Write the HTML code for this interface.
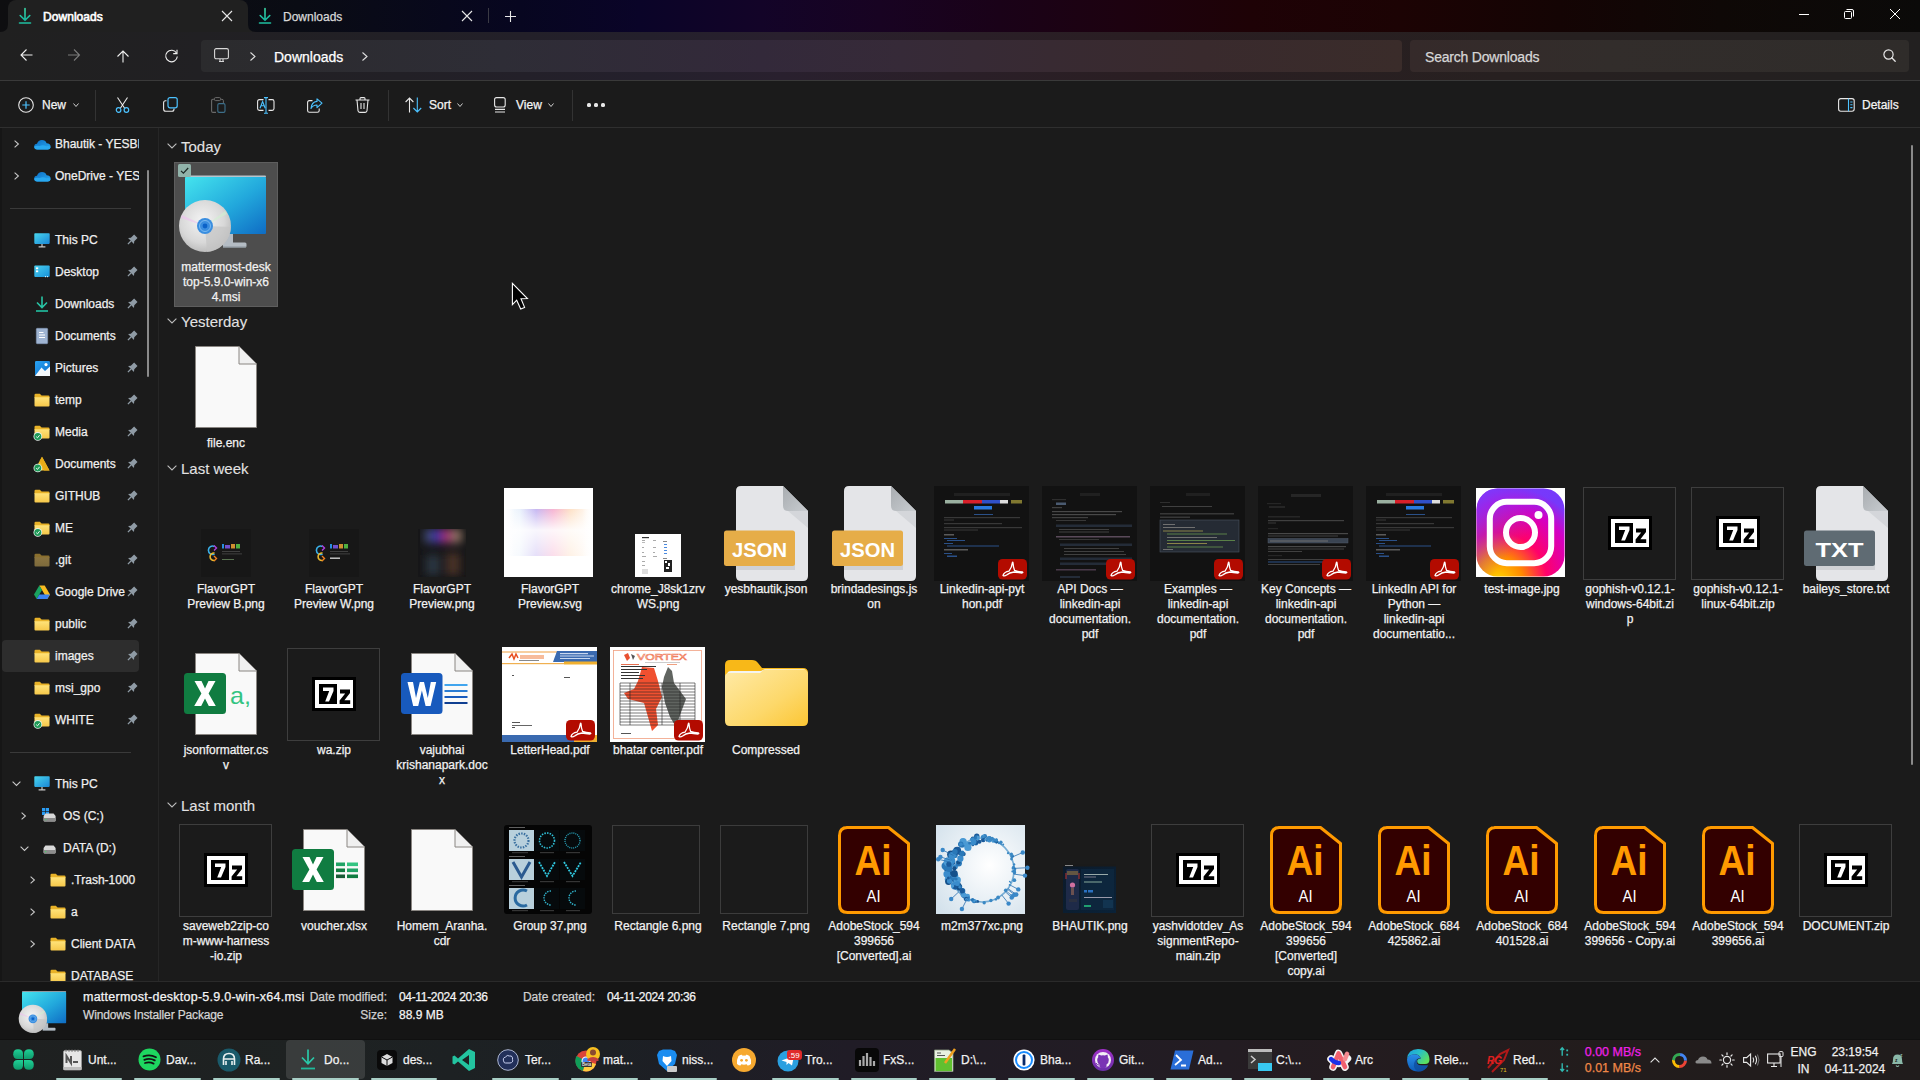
<!DOCTYPE html>
<html><head><meta charset="utf-8"><title>Downloads</title>
<style>
*{margin:0;padding:0;box-sizing:border-box}
html,body{width:1920px;height:1080px;overflow:hidden;background:#1b1b1b;font-family:"Liberation Sans",sans-serif;color:#fff}
.abs{position:absolute}
.t{position:absolute;white-space:nowrap;-webkit-text-stroke:0.25px currentColor}
svg{position:absolute;overflow:visible}
</style></head><body>
<div class="abs" style="left:0px;top:0px;width:1920px;height:32px;background:linear-gradient(90deg,#0e0e10 0px,#0a0c14 300px,#070620 520px,#0a0428 640px,#130428 760px,#180322 880px,#1a0218 1000px,#1d0210 1120px,#1e0206 1250px,#1c0304 1400px,#140404 1560px,#0e0806 1720px,#0b0a09 1920px)"></div><div class="abs" style="left:8px;top:0px;width:240px;height:32px;background:#202020;border-radius:8px 8px 0 0"></div><svg style="left:0px;top:24px;" width="8" height="8" viewBox="0 0 8 8"><path d="M0 8 Q8 8 8 0 L8 8 Z" fill="#202020"/></svg><svg style="left:248px;top:24px;" width="8" height="8" viewBox="0 0 8 8"><path d="M8 8 Q0 8 0 0 L0 8 Z" fill="#202020"/></svg><svg style="left:19px;top:8px;transform:scale(1.0);transform-origin:0 0" width="12" height="16" viewBox="0 0 12 16"><defs><linearGradient id="dg" x1="0" y1="0" x2="0" y2="1"><stop offset="0" stop-color="#3ad6a6"/><stop offset="1" stop-color="#16b8a0"/></linearGradient></defs><path d="M6 0.5 V12 M1.2 7.5 L6 12.3 L10.8 7.5" stroke="url(#dg)" stroke-width="1.6" fill="none" stroke-linecap="round" stroke-linejoin="round"/><path d="M0.5 15 H11.5" stroke="#1fbfa0" stroke-width="1.6" stroke-linecap="round"/></svg><div class="t" style="top:9.8px;font-size:12px;line-height:15px;color:#ffffff;left:43px;-webkit-text-stroke:0.6px #fff;letter-spacing:0.05px">Downloads</div><svg style="left:221.5px;top:11px;" width="10" height="10" viewBox="0 0 10 10"><path d="M0 0 L10 10 M10 0 L0 10" stroke="#e8e8e8" stroke-width="1.1"/></svg><svg style="left:259px;top:8px;transform:scale(1.0);transform-origin:0 0" width="12" height="16" viewBox="0 0 12 16"><defs><linearGradient id="dg" x1="0" y1="0" x2="0" y2="1"><stop offset="0" stop-color="#3ad6a6"/><stop offset="1" stop-color="#16b8a0"/></linearGradient></defs><path d="M6 0.5 V12 M1.2 7.5 L6 12.3 L10.8 7.5" stroke="url(#dg)" stroke-width="1.6" fill="none" stroke-linecap="round" stroke-linejoin="round"/><path d="M0.5 15 H11.5" stroke="#1fbfa0" stroke-width="1.6" stroke-linecap="round"/></svg><div class="t" style="top:9.8px;font-size:12px;line-height:15px;color:#d8d8d8;left:283px;">Downloads</div><svg style="left:462px;top:11px;" width="10" height="10" viewBox="0 0 10 10"><path d="M0 0 L10 10 M10 0 L0 10" stroke="#e8e8e8" stroke-width="1.1"/></svg><div class="abs" style="left:488px;top:8px;width:1px;height:15px;background:#3a3a44"></div><svg style="left:505px;top:11px;" width="11" height="11" viewBox="0 0 11 11"><path d="M5.5 0 V11 M0 5.5 H11" stroke="#e8e8e8" stroke-width="1.1"/></svg><div class="abs" style="left:1799px;top:14px;width:10px;height:1px;background:#fff"></div><svg style="left:1844px;top:9px;" width="10" height="10" viewBox="0 0 10 10"><rect x="0.5" y="2.5" width="7" height="7" rx="1" fill="none" stroke="#fff" stroke-width="1"/><path d="M2.5 0.5 H8 Q9.5 0.5 9.5 2 V7.5" fill="none" stroke="#fff" stroke-width="1"/></svg><svg style="left:1890px;top:9px;" width="10" height="10" viewBox="0 0 10 10"><path d="M0 0 L10 10 M10 0 L0 10" stroke="#fff" stroke-width="1"/></svg><div class="abs" style="left:0px;top:32px;width:1920px;height:48px;background:linear-gradient(90deg,#202020 0px,#222026 400px,#24202c 650px,#29202e 780px,#2a1f28 950px,#2a1e22 1150px,#272020 1500px,#222020 1920px)"></div><div class="abs" style="left:201px;top:40px;width:1201px;height:32px;background:linear-gradient(90deg,#2b2b2d 0px,#2e2d36 300px,#33293a 560px,#362a38 700px,#382a32 850px,#392a2d 1000px,#3a2c2a 1201px);border-radius:4px"></div><div class="abs" style="left:1410px;top:40px;width:499px;height:32px;background:linear-gradient(90deg,#352a2a 0px,#322d2b 200px,#2f2c2a 499px);border-radius:4px"></div><svg style="left:20px;top:49px;" width="13" height="12" viewBox="0 0 13 12"><path d="M12.5 6 H1 M6.5 0.5 L1 6 L6.5 11.5" stroke="#f0f0f0" stroke-width="1.1" fill="none"/></svg><svg style="left:68px;top:49px;" width="13" height="12" viewBox="0 0 13 12"><path d="M0 6 H11.5 M6 0.5 L11.5 6 L6 11.5" stroke="#7a7a7a" stroke-width="1.1" fill="none"/></svg><svg style="left:117px;top:49.5px;" width="12" height="13" viewBox="0 0 12 13"><path d="M6 12.5 V1 M0.5 6.5 L6 1 L11.5 6.5" stroke="#f0f0f0" stroke-width="1.1" fill="none"/></svg><svg style="left:165px;top:49px;" width="13" height="13" viewBox="0 0 13 13"><path d="M11.6 4.2 A5.8 5.8 0 1 0 12.3 7.5" stroke="#f0f0f0" stroke-width="1.1" fill="none"/><path d="M12 0.8 V4.6 H8.2" stroke="#f0f0f0" stroke-width="1.1" fill="none"/></svg><svg style="left:214px;top:48px;" width="15" height="15" viewBox="0 0 15 15"><rect x="0.6" y="0.6" width="13.8" height="10.2" rx="1.6" fill="none" stroke="#d8d8d8" stroke-width="1.1"/><path d="M5 13.5 H10 M6 11 V13.5 M9 11 V13.5" stroke="#d8d8d8" stroke-width="1.1"/></svg><svg style="left:250px;top:51.5px;" width="6" height="9" viewBox="0 0 6 9"><path d="M0.5 0.5 L5 4.5 L0.5 8.5" stroke="#e0e0e0" stroke-width="1.1" fill="none"/></svg><div class="t" style="top:47.9px;font-size:14px;line-height:18px;color:#ffffff;left:274px;">Downloads</div><svg style="left:362px;top:51.5px;" width="6" height="9" viewBox="0 0 6 9"><path d="M0.5 0.5 L5 4.5 L0.5 8.5" stroke="#e0e0e0" stroke-width="1.1" fill="none"/></svg><div class="t" style="top:47.9px;font-size:14px;line-height:18px;color:#d6d6d6;left:1425px;letter-spacing:-0.2px">Search Downloads</div><svg style="left:1883px;top:49px;" width="13" height="13" viewBox="0 0 13 13"><circle cx="5.5" cy="5.5" r="4.6" fill="none" stroke="#e8e8e8" stroke-width="1.2"/><path d="M8.8 8.8 L12.2 12.2" stroke="#e8e8e8" stroke-width="1.3" stroke-linecap="round"/></svg><div class="abs" style="left:0px;top:80px;width:1920px;height:1px;background:#3a3a3a"></div><div class="abs" style="left:0px;top:81px;width:1920px;height:46px;background:#1b1b1b"></div><div class="abs" style="left:0px;top:127px;width:1920px;height:1px;background:#2f2f2f"></div><svg style="left:18px;top:97px;" width="16" height="16" viewBox="0 0 16 16"><circle cx="8" cy="8" r="7.3" fill="none" stroke="#e6e6e6" stroke-width="1.1"/><path d="M8 4.3 V11.7 M4.3 8 H11.7" stroke="#4cc2ff" stroke-width="1.2"/></svg><div class="t" style="top:98.3px;font-size:12px;line-height:15px;color:#f4f4f4;left:42px;">New</div><svg style="left:73px;top:102.5px;" width="6" height="4" viewBox="0 0 6 4"><path d="M0.5 0.5 L3.0 3.5 L5.5 0.5" stroke="#cfcfcf" stroke-width="1" fill="none"/></svg><div class="abs" style="left:95px;top:90px;width:1px;height:31px;background:#333"></div><svg style="left:115px;top:97px;" width="15" height="16" viewBox="0 0 15 16"><path d="M2.5 0.5 L9.8 11.5 M12.5 0.5 L5.2 11.5" stroke="#e8e8e8" stroke-width="1.1" fill="none"/><circle cx="3.6" cy="13" r="2.3" fill="none" stroke="#4cc2ff" stroke-width="1.2"/><circle cx="11.4" cy="13" r="2.3" fill="none" stroke="#4cc2ff" stroke-width="1.2"/></svg><svg style="left:163px;top:97px;" width="15" height="15" viewBox="0 0 15 15"><path d="M3.5 3.8 H2.6 Q0.6 3.8 0.6 5.8 V12 Q0.6 14.3 2.8 14.3 H9 Q11 14.3 11 12.3 V11.5" fill="none" stroke="#e8e8e8" stroke-width="1.1"/><rect x="5" y="0.6" width="9.2" height="10.2" rx="2" fill="none" stroke="#4cc2ff" stroke-width="1.2"/></svg><svg style="left:211px;top:97px;" width="15" height="16" viewBox="0 0 15 16"><path d="M3.5 2.3 H2 Q0.6 2.3 0.6 3.8 V14 Q0.6 15.4 2 15.4 H5" fill="none" stroke="#6a6a6a" stroke-width="1.1"/><rect x="3.5" y="0.6" width="6" height="3" rx="1" fill="none" stroke="#6a6a6a" stroke-width="1"/><path d="M9.6 2.3 H11 Q12.4 2.3 12.4 3.8 V6" fill="none" stroke="#6a6a6a" stroke-width="1"/><rect x="6.8" y="6.6" width="7.2" height="8.8" rx="1.3" fill="none" stroke="#3d6f8a" stroke-width="1.1"/></svg><svg style="left:257px;top:97px;" width="18" height="17" viewBox="0 0 18 17"><path d="M6.5 2.6 H2.4 Q0.6 2.6 0.6 4.4 V11.6 Q0.6 13.4 2.4 13.4 H6.5 M11.5 2.6 H15.2 Q17 2.6 17 4.4 V11.6 Q17 13.4 15.2 13.4 H11.5" fill="none" stroke="#e8e8e8" stroke-width="1.1"/><path d="M9 0.6 V16.2 M7 0.6 H11 M7 16.2 H11" stroke="#4cc2ff" stroke-width="1.1"/><path d="M3 11.2 L5.6 4.6 L8.2 11.2 M4 8.8 H7.2" stroke="#4cc2ff" stroke-width="1.1" fill="none"/></svg><svg style="left:307px;top:98px;" width="16" height="15" viewBox="0 0 16 15"><path d="M5.5 2.6 H2.4 Q0.6 2.6 0.6 4.4 V12.4 Q0.6 14.2 2.4 14.2 H10.4 Q12.2 14.2 12.2 12.4 V10.5" fill="none" stroke="#e8e8e8" stroke-width="1.1"/><path d="M10 0.8 L15 5.2 L10 9.6 V7 Q6 7 4 10.5 Q4.4 4 10 3.4 Z" fill="none" stroke="#4cc2ff" stroke-width="1.1" stroke-linejoin="round"/></svg><svg style="left:355px;top:97px;" width="15" height="16" viewBox="0 0 15 16"><path d="M0.5 3 H14.5 M5 3 V1.6 Q5 0.6 6 0.6 H9 Q10 0.6 10 1.6 V3 M2 3 L3 13.8 Q3.2 15.4 4.8 15.4 H10.2 Q11.8 15.4 12 13.8 L13 3 M6 6 V12 M9 6 V12" fill="none" stroke="#e8e8e8" stroke-width="1.1"/></svg><div class="abs" style="left:388px;top:90px;width:1px;height:31px;background:#333"></div><svg style="left:405px;top:97px;" width="17" height="16" viewBox="0 0 17 16"><path d="M4.5 15.4 V1 M0.6 5 L4.5 1 L8.4 5" stroke="#e8e8e8" stroke-width="1.1" fill="none"/><path d="M12.3 0.6 V15 M8.4 11 L12.3 15 L16.2 11" stroke="#4cc2ff" stroke-width="1.1" fill="none"/></svg><div class="t" style="top:98.3px;font-size:12px;line-height:15px;color:#f4f4f4;left:429px;">Sort</div><svg style="left:457px;top:102.5px;" width="6" height="4" viewBox="0 0 6 4"><path d="M0.5 0.5 L3.0 3.5 L5.5 0.5" stroke="#cfcfcf" stroke-width="1" fill="none"/></svg><svg style="left:494px;top:97px;" width="12" height="16" viewBox="0 0 12 16"><rect x="0.6" y="0.6" width="10.6" height="9.4" rx="2" fill="none" stroke="#e8e8e8" stroke-width="1.1"/><path d="M1 12.4 H11 M1 15 H11" stroke="#e8e8e8" stroke-width="1.1"/></svg><div class="t" style="top:98.3px;font-size:12px;line-height:15px;color:#f4f4f4;left:516px;">View</div><svg style="left:548px;top:102.5px;" width="6" height="4" viewBox="0 0 6 4"><path d="M0.5 0.5 L3.0 3.5 L5.5 0.5" stroke="#cfcfcf" stroke-width="1" fill="none"/></svg><div class="abs" style="left:572px;top:90px;width:1px;height:31px;background:#333"></div><div class="abs" style="left:587.4px;top:103.4px;width:3.2px;height:3.2px;background:#e8e8e8;border-radius:50%"></div><div class="abs" style="left:594.4px;top:103.4px;width:3.2px;height:3.2px;background:#e8e8e8;border-radius:50%"></div><div class="abs" style="left:601.4px;top:103.4px;width:3.2px;height:3.2px;background:#e8e8e8;border-radius:50%"></div><svg style="left:1838px;top:98px;" width="17" height="14" viewBox="0 0 17 14"><rect x="0.6" y="0.6" width="15.6" height="12.6" rx="2.2" fill="none" stroke="#e8e8e8" stroke-width="1.1"/><path d="M10.5 0.6 V13.2" stroke="#4cc2ff" stroke-width="1.1"/><path d="M12.3 4 H14.5 M12.3 6.8 H14.5 M12.3 9.6 H14.5" stroke="#4cc2ff" stroke-width="1.1"/></svg><div class="t" style="top:98.3px;font-size:12px;line-height:15px;color:#f4f4f4;left:1862px;">Details</div><div class="abs" style="left:0px;top:128px;width:158px;height:853px;background:#1b1b1b"></div><div class="abs" style="left:158px;top:128px;width:1px;height:853px;background:#262626"></div><div class="abs" style="left:0px;top:128px;width:2px;height:853px;background:#161616"></div><svg style="left:14px;top:140px;" width="5" height="8" viewBox="0 0 5 8"><path d="M0.6 0.6 L4.4 4 L0.6 7.4" stroke="#c8c8c8" stroke-width="1.1" fill="none"/></svg><svg style="left:34px;top:138.5px;" width="17" height="11" viewBox="0 0 17 11"><defs><linearGradient id="cg" x1="0" y1="0" x2="1" y2="1"><stop offset="0" stop-color="#0b6fc6"/><stop offset="1" stop-color="#2aa6ec"/></linearGradient></defs><path d="M3.2 10.5 Q0.2 10.5 0.2 7.6 Q0.2 5 3 4.8 Q4 1 8 1 Q11.4 1 12.6 4.2 Q16.6 4.4 16.6 7.6 Q16.6 10.5 13.6 10.5 Z" fill="url(#cg)"/><path d="M3.2 10.5 Q0.2 10.5 0.2 7.6 Q2 6.2 5.5 7 Q9 5.6 12.4 7.2 Q15.6 6.6 16.6 8 Q16.2 10.5 13.6 10.5 Z" fill="#28a8f0"/></svg><div class="t" style="top:137.3px;font-size:12px;line-height:15px;color:#f0f0f0;left:55px;width:84px;overflow:hidden">Bhautik - YESBH</div><svg style="left:14px;top:172px;" width="5" height="8" viewBox="0 0 5 8"><path d="M0.6 0.6 L4.4 4 L0.6 7.4" stroke="#c8c8c8" stroke-width="1.1" fill="none"/></svg><svg style="left:34px;top:170.5px;" width="17" height="11" viewBox="0 0 17 11"><defs><linearGradient id="cg" x1="0" y1="0" x2="1" y2="1"><stop offset="0" stop-color="#0b6fc6"/><stop offset="1" stop-color="#2aa6ec"/></linearGradient></defs><path d="M3.2 10.5 Q0.2 10.5 0.2 7.6 Q0.2 5 3 4.8 Q4 1 8 1 Q11.4 1 12.6 4.2 Q16.6 4.4 16.6 7.6 Q16.6 10.5 13.6 10.5 Z" fill="url(#cg)"/><path d="M3.2 10.5 Q0.2 10.5 0.2 7.6 Q2 6.2 5.5 7 Q9 5.6 12.4 7.2 Q15.6 6.6 16.6 8 Q16.2 10.5 13.6 10.5 Z" fill="#28a8f0"/></svg><div class="t" style="top:169.3px;font-size:12px;line-height:15px;color:#f0f0f0;left:55px;width:84px;overflow:hidden">OneDrive - YESE</div><div class="abs" style="left:10px;top:208px;width:121px;height:1px;background:#3a3a3a"></div><div class="abs" style="left:147px;top:170px;width:2px;height:207px;background:#8a8a8a;border-radius:1px"></div><div class="abs" style="left:2px;top:640px;width:137px;height:32px;background:#2d2d2d;border-radius:4px"></div><svg style="left:34px;top:233px;" width="16" height="15" viewBox="0 0 16 15"><defs><linearGradient id="mg" x1="0" y1="0" x2="1" y2="1"><stop offset="0" stop-color="#48d6ee"/><stop offset="1" stop-color="#1a86d6"/></linearGradient></defs><rect x="0.3" y="0.3" width="15.4" height="10.6" rx="0.8" fill="url(#mg)"/><path d="M8 11 V13.4 M4.6 13.8 H11.4" stroke="#c8c8c8" stroke-width="1.2"/></svg><div class="t" style="top:233.3px;font-size:12px;line-height:15px;color:#f0f0f0;left:55px;">This PC</div><svg style="left:125.5px;top:234px;" width="12" height="12" viewBox="0 0 12 12"><g transform="rotate(45 6 6)"><path d="M3.6 0.6 H8.4 V5.2 L10.2 7.4 H1.8 L3.6 5.2 Z" fill="#8f9ba5"/><path d="M6 7.4 V11.8" stroke="#8f9ba5" stroke-width="1.3"/></g></svg><svg style="left:34px;top:265px;" width="16" height="13" viewBox="0 0 16 13"><defs><linearGradient id="dkg" x1="0" y1="0" x2="1" y2="1"><stop offset="0" stop-color="#4ad0f0"/><stop offset="1" stop-color="#1790d8"/></linearGradient></defs><rect x="0.3" y="0.5" width="15.4" height="11.6" rx="1" fill="url(#dkg)"/><rect x="2" y="2.4" width="2.2" height="1.8" fill="#fff"/><rect x="2" y="5.4" width="2.2" height="1.8" fill="#fff"/><rect x="11" y="11.2" width="1" height="1" fill="#fff"/><rect x="13" y="11.2" width="1" height="1" fill="#fff"/></svg><div class="t" style="top:265.3px;font-size:12px;line-height:15px;color:#f0f0f0;left:55px;">Desktop</div><svg style="left:125.5px;top:266px;" width="12" height="12" viewBox="0 0 12 12"><g transform="rotate(45 6 6)"><path d="M3.6 0.6 H8.4 V5.2 L10.2 7.4 H1.8 L3.6 5.2 Z" fill="#8f9ba5"/><path d="M6 7.4 V11.8" stroke="#8f9ba5" stroke-width="1.3"/></g></svg><svg style="left:35px;top:296px;" width="14" height="16" viewBox="0 0 14 16"><path d="M7 0.5 V11 M2 6.5 L7 11.5 L12 6.5" stroke="#28c4a4" stroke-width="1.6" fill="none"/><path d="M1 15 H13" stroke="#20b89a" stroke-width="1.7"/></svg><div class="t" style="top:297.3px;font-size:12px;line-height:15px;color:#f0f0f0;left:55px;">Downloads</div><svg style="left:125.5px;top:298px;" width="12" height="12" viewBox="0 0 12 12"><g transform="rotate(45 6 6)"><path d="M3.6 0.6 H8.4 V5.2 L10.2 7.4 H1.8 L3.6 5.2 Z" fill="#8f9ba5"/><path d="M6 7.4 V11.8" stroke="#8f9ba5" stroke-width="1.3"/></g></svg><svg style="left:36px;top:328px;" width="12" height="16" viewBox="0 0 12 16"><rect x="0.3" y="0.3" width="11.4" height="15.4" rx="1" fill="#9fb4d2"/><rect x="0.3" y="0.3" width="11.4" height="15.4" rx="1" fill="none" stroke="#7f94b2" stroke-width="0.6"/><path d="M3 4.5 H7.5 M3 7 H9 M3 9.5 H9" stroke="#ffffff" stroke-width="1.2"/></svg><div class="t" style="top:329.3px;font-size:12px;line-height:15px;color:#f0f0f0;left:55px;">Documents</div><svg style="left:125.5px;top:330px;" width="12" height="12" viewBox="0 0 12 12"><g transform="rotate(45 6 6)"><path d="M3.6 0.6 H8.4 V5.2 L10.2 7.4 H1.8 L3.6 5.2 Z" fill="#8f9ba5"/><path d="M6 7.4 V11.8" stroke="#8f9ba5" stroke-width="1.3"/></g></svg><svg style="left:35px;top:361px;" width="15" height="15" viewBox="0 0 15 15"><defs><linearGradient id="pg" x1="0" y1="0" x2="1" y2="1"><stop offset="0" stop-color="#2aa4f4"/><stop offset="1" stop-color="#0c6cc8"/></linearGradient></defs><rect x="0" y="0" width="15" height="15" rx="1.2" fill="url(#pg)"/><path d="M0 15 L6.5 6.5 L10 10 L15 5.5 V15 Z" fill="#f4f8fc"/><circle cx="11" cy="3.6" r="1.6" fill="#fff"/></svg><div class="t" style="top:361.3px;font-size:12px;line-height:15px;color:#f0f0f0;left:55px;">Pictures</div><svg style="left:125.5px;top:362px;" width="12" height="12" viewBox="0 0 12 12"><g transform="rotate(45 6 6)"><path d="M3.6 0.6 H8.4 V5.2 L10.2 7.4 H1.8 L3.6 5.2 Z" fill="#8f9ba5"/><path d="M6 7.4 V11.8" stroke="#8f9ba5" stroke-width="1.3"/></g></svg><svg style="left:34px;top:393px;" width="16" height="14" viewBox="0 0 16 14"><defs><linearGradient id="fg0" x1="0" y1="0" x2="0" y2="1"><stop offset="0" stop-color="#ffe37a"/><stop offset="1" stop-color="#f6c84a"/></linearGradient></defs><path d="M0.5 2 Q0.5 0.8 1.7 0.8 H5.8 L7.6 2.4 H14.3 Q15.5 2.4 15.5 3.6 V5 H0.5 Z" fill="#e8b228"/><path d="M0.5 4.2 H15.5 V12.4 Q15.5 13.4 14.5 13.4 H1.5 Q0.5 13.4 0.5 12.4 Z" fill="url(#fg0)"/></svg><div class="t" style="top:393.3px;font-size:12px;line-height:15px;color:#f0f0f0;left:55px;">temp</div><svg style="left:125.5px;top:394px;" width="12" height="12" viewBox="0 0 12 12"><g transform="rotate(45 6 6)"><path d="M3.6 0.6 H8.4 V5.2 L10.2 7.4 H1.8 L3.6 5.2 Z" fill="#8f9ba5"/><path d="M6 7.4 V11.8" stroke="#8f9ba5" stroke-width="1.3"/></g></svg><svg style="left:34px;top:425px;" width="16" height="14" viewBox="0 0 16 14"><defs><linearGradient id="fg0" x1="0" y1="0" x2="0" y2="1"><stop offset="0" stop-color="#ffe37a"/><stop offset="1" stop-color="#f6c84a"/></linearGradient></defs><path d="M0.5 2 Q0.5 0.8 1.7 0.8 H5.8 L7.6 2.4 H14.3 Q15.5 2.4 15.5 3.6 V5 H0.5 Z" fill="#e8b228"/><path d="M0.5 4.2 H15.5 V12.4 Q15.5 13.4 14.5 13.4 H1.5 Q0.5 13.4 0.5 12.4 Z" fill="url(#fg0)"/><circle cx="3.8" cy="11.4" r="4.3" fill="#e8f0ec"/><circle cx="3.8" cy="11.4" r="3.5" fill="#1f9a58"/><path d="M2.2 11.6 L3.5 12.8 L5.6 10.2" stroke="#fff" stroke-width="0.9" fill="none"/></svg><div class="t" style="top:425.3px;font-size:12px;line-height:15px;color:#f0f0f0;left:55px;">Media</div><svg style="left:125.5px;top:426px;" width="12" height="12" viewBox="0 0 12 12"><g transform="rotate(45 6 6)"><path d="M3.6 0.6 H8.4 V5.2 L10.2 7.4 H1.8 L3.6 5.2 Z" fill="#8f9ba5"/><path d="M6 7.4 V11.8" stroke="#8f9ba5" stroke-width="1.3"/></g></svg><svg style="left:34px;top:456px;" width="16" height="16" viewBox="0 0 16 16"><path d="M8 0.8 L15.5 14.5 H0.5 Z" fill="#f2c230"/><path d="M8 0.8 L5.6 5 L10 14.5 H15.5 Z" fill="#e8ac18"/><circle cx="3.8" cy="12" r="4.3" fill="#e8f0ec"/><circle cx="3.8" cy="12" r="3.5" fill="#1f9a58"/><path d="M2.2 12.2 L3.5 13.4 L5.6 10.8" stroke="#fff" stroke-width="0.9" fill="none"/></svg><div class="t" style="top:457.3px;font-size:12px;line-height:15px;color:#f0f0f0;left:55px;">Documents</div><svg style="left:125.5px;top:458px;" width="12" height="12" viewBox="0 0 12 12"><g transform="rotate(45 6 6)"><path d="M3.6 0.6 H8.4 V5.2 L10.2 7.4 H1.8 L3.6 5.2 Z" fill="#8f9ba5"/><path d="M6 7.4 V11.8" stroke="#8f9ba5" stroke-width="1.3"/></g></svg><svg style="left:34px;top:489px;" width="16" height="14" viewBox="0 0 16 14"><defs><linearGradient id="fg0" x1="0" y1="0" x2="0" y2="1"><stop offset="0" stop-color="#ffe37a"/><stop offset="1" stop-color="#f6c84a"/></linearGradient></defs><path d="M0.5 2 Q0.5 0.8 1.7 0.8 H5.8 L7.6 2.4 H14.3 Q15.5 2.4 15.5 3.6 V5 H0.5 Z" fill="#e8b228"/><path d="M0.5 4.2 H15.5 V12.4 Q15.5 13.4 14.5 13.4 H1.5 Q0.5 13.4 0.5 12.4 Z" fill="url(#fg0)"/></svg><div class="t" style="top:489.3px;font-size:12px;line-height:15px;color:#f0f0f0;left:55px;">GITHUB</div><svg style="left:125.5px;top:490px;" width="12" height="12" viewBox="0 0 12 12"><g transform="rotate(45 6 6)"><path d="M3.6 0.6 H8.4 V5.2 L10.2 7.4 H1.8 L3.6 5.2 Z" fill="#8f9ba5"/><path d="M6 7.4 V11.8" stroke="#8f9ba5" stroke-width="1.3"/></g></svg><svg style="left:34px;top:521px;" width="16" height="14" viewBox="0 0 16 14"><defs><linearGradient id="fg0" x1="0" y1="0" x2="0" y2="1"><stop offset="0" stop-color="#ffe37a"/><stop offset="1" stop-color="#f6c84a"/></linearGradient></defs><path d="M0.5 2 Q0.5 0.8 1.7 0.8 H5.8 L7.6 2.4 H14.3 Q15.5 2.4 15.5 3.6 V5 H0.5 Z" fill="#e8b228"/><path d="M0.5 4.2 H15.5 V12.4 Q15.5 13.4 14.5 13.4 H1.5 Q0.5 13.4 0.5 12.4 Z" fill="url(#fg0)"/><circle cx="3.8" cy="11.4" r="4.3" fill="#e8f0ec"/><circle cx="3.8" cy="11.4" r="3.5" fill="#1f9a58"/><path d="M2.2 11.6 L3.5 12.8 L5.6 10.2" stroke="#fff" stroke-width="0.9" fill="none"/></svg><div class="t" style="top:521.3px;font-size:12px;line-height:15px;color:#f0f0f0;left:55px;">ME</div><svg style="left:125.5px;top:522px;" width="12" height="12" viewBox="0 0 12 12"><g transform="rotate(45 6 6)"><path d="M3.6 0.6 H8.4 V5.2 L10.2 7.4 H1.8 L3.6 5.2 Z" fill="#8f9ba5"/><path d="M6 7.4 V11.8" stroke="#8f9ba5" stroke-width="1.3"/></g></svg><svg style="left:34px;top:553px;" width="16" height="14" viewBox="0 0 16 14"><defs><linearGradient id="fg1" x1="0" y1="0" x2="0" y2="1"><stop offset="0" stop-color="#8a7440"/><stop offset="1" stop-color="#7d6a3c"/></linearGradient></defs><path d="M0.5 2 Q0.5 0.8 1.7 0.8 H5.8 L7.6 2.4 H14.3 Q15.5 2.4 15.5 3.6 V5 H0.5 Z" fill="#8a6f2e"/><path d="M0.5 4.2 H15.5 V12.4 Q15.5 13.4 14.5 13.4 H1.5 Q0.5 13.4 0.5 12.4 Z" fill="url(#fg1)"/></svg><div class="t" style="top:553.3px;font-size:12px;line-height:15px;color:#f0f0f0;left:55px;">.git</div><svg style="left:125.5px;top:554px;" width="12" height="12" viewBox="0 0 12 12"><g transform="rotate(45 6 6)"><path d="M3.6 0.6 H8.4 V5.2 L10.2 7.4 H1.8 L3.6 5.2 Z" fill="#8f9ba5"/><path d="M6 7.4 V11.8" stroke="#8f9ba5" stroke-width="1.3"/></g></svg><svg style="left:34px;top:585px;" width="16" height="14" viewBox="0 0 16 14"><path d="M5.3 0.5 H10.7 L16 9.6 L13.3 14 Z" fill="#f8bc20"/><path d="M5.3 0.5 L0 9.6 L2.7 14 L8 4.9 Z" fill="#1aa260"/><path d="M2.7 14 H13.3 L16 9.6 H5.3 Z" fill="#3b82f0"/><path d="M8 4.9 L10.7 9.6 H5.3 Z" fill="#1b1b1b" opacity="0"/></svg><div class="t" style="top:585.3px;font-size:12px;line-height:15px;color:#f0f0f0;left:55px;">Google Drive</div><svg style="left:125.5px;top:586px;" width="12" height="12" viewBox="0 0 12 12"><g transform="rotate(45 6 6)"><path d="M3.6 0.6 H8.4 V5.2 L10.2 7.4 H1.8 L3.6 5.2 Z" fill="#8f9ba5"/><path d="M6 7.4 V11.8" stroke="#8f9ba5" stroke-width="1.3"/></g></svg><svg style="left:34px;top:617px;" width="16" height="14" viewBox="0 0 16 14"><defs><linearGradient id="fg0" x1="0" y1="0" x2="0" y2="1"><stop offset="0" stop-color="#ffe37a"/><stop offset="1" stop-color="#f6c84a"/></linearGradient></defs><path d="M0.5 2 Q0.5 0.8 1.7 0.8 H5.8 L7.6 2.4 H14.3 Q15.5 2.4 15.5 3.6 V5 H0.5 Z" fill="#e8b228"/><path d="M0.5 4.2 H15.5 V12.4 Q15.5 13.4 14.5 13.4 H1.5 Q0.5 13.4 0.5 12.4 Z" fill="url(#fg0)"/></svg><div class="t" style="top:617.3px;font-size:12px;line-height:15px;color:#f0f0f0;left:55px;">public</div><svg style="left:125.5px;top:618px;" width="12" height="12" viewBox="0 0 12 12"><g transform="rotate(45 6 6)"><path d="M3.6 0.6 H8.4 V5.2 L10.2 7.4 H1.8 L3.6 5.2 Z" fill="#8f9ba5"/><path d="M6 7.4 V11.8" stroke="#8f9ba5" stroke-width="1.3"/></g></svg><svg style="left:34px;top:649px;" width="16" height="14" viewBox="0 0 16 14"><defs><linearGradient id="fg0" x1="0" y1="0" x2="0" y2="1"><stop offset="0" stop-color="#ffe37a"/><stop offset="1" stop-color="#f6c84a"/></linearGradient></defs><path d="M0.5 2 Q0.5 0.8 1.7 0.8 H5.8 L7.6 2.4 H14.3 Q15.5 2.4 15.5 3.6 V5 H0.5 Z" fill="#e8b228"/><path d="M0.5 4.2 H15.5 V12.4 Q15.5 13.4 14.5 13.4 H1.5 Q0.5 13.4 0.5 12.4 Z" fill="url(#fg0)"/></svg><div class="t" style="top:649.3px;font-size:12px;line-height:15px;color:#f0f0f0;left:55px;">images</div><svg style="left:125.5px;top:650px;" width="12" height="12" viewBox="0 0 12 12"><g transform="rotate(45 6 6)"><path d="M3.6 0.6 H8.4 V5.2 L10.2 7.4 H1.8 L3.6 5.2 Z" fill="#8f9ba5"/><path d="M6 7.4 V11.8" stroke="#8f9ba5" stroke-width="1.3"/></g></svg><svg style="left:34px;top:681px;" width="16" height="14" viewBox="0 0 16 14"><defs><linearGradient id="fg0" x1="0" y1="0" x2="0" y2="1"><stop offset="0" stop-color="#ffe37a"/><stop offset="1" stop-color="#f6c84a"/></linearGradient></defs><path d="M0.5 2 Q0.5 0.8 1.7 0.8 H5.8 L7.6 2.4 H14.3 Q15.5 2.4 15.5 3.6 V5 H0.5 Z" fill="#e8b228"/><path d="M0.5 4.2 H15.5 V12.4 Q15.5 13.4 14.5 13.4 H1.5 Q0.5 13.4 0.5 12.4 Z" fill="url(#fg0)"/></svg><div class="t" style="top:681.3px;font-size:12px;line-height:15px;color:#f0f0f0;left:55px;">msi_gpo</div><svg style="left:125.5px;top:682px;" width="12" height="12" viewBox="0 0 12 12"><g transform="rotate(45 6 6)"><path d="M3.6 0.6 H8.4 V5.2 L10.2 7.4 H1.8 L3.6 5.2 Z" fill="#8f9ba5"/><path d="M6 7.4 V11.8" stroke="#8f9ba5" stroke-width="1.3"/></g></svg><svg style="left:34px;top:713px;" width="16" height="14" viewBox="0 0 16 14"><defs><linearGradient id="fg0" x1="0" y1="0" x2="0" y2="1"><stop offset="0" stop-color="#ffe37a"/><stop offset="1" stop-color="#f6c84a"/></linearGradient></defs><path d="M0.5 2 Q0.5 0.8 1.7 0.8 H5.8 L7.6 2.4 H14.3 Q15.5 2.4 15.5 3.6 V5 H0.5 Z" fill="#e8b228"/><path d="M0.5 4.2 H15.5 V12.4 Q15.5 13.4 14.5 13.4 H1.5 Q0.5 13.4 0.5 12.4 Z" fill="url(#fg0)"/><circle cx="3.8" cy="11.4" r="4.3" fill="#e8f0ec"/><circle cx="3.8" cy="11.4" r="3.5" fill="#1f9a58"/><path d="M2.2 11.6 L3.5 12.8 L5.6 10.2" stroke="#fff" stroke-width="0.9" fill="none"/></svg><div class="t" style="top:713.3px;font-size:12px;line-height:15px;color:#f0f0f0;left:55px;">WHITE</div><svg style="left:125.5px;top:714px;" width="12" height="12" viewBox="0 0 12 12"><g transform="rotate(45 6 6)"><path d="M3.6 0.6 H8.4 V5.2 L10.2 7.4 H1.8 L3.6 5.2 Z" fill="#8f9ba5"/><path d="M6 7.4 V11.8" stroke="#8f9ba5" stroke-width="1.3"/></g></svg><div class="abs" style="left:10px;top:752px;width:121px;height:1px;background:#3a3a3a"></div><svg style="left:12px;top:781.0px;" width="9" height="5" viewBox="0 0 9 5"><path d="M0.6 0.6 L4.5 4.4 L8.4 0.6" stroke="#c8c8c8" stroke-width="1.1" fill="none"/></svg><svg style="left:34px;top:776px;" width="16" height="15" viewBox="0 0 16 15"><defs><linearGradient id="mg" x1="0" y1="0" x2="1" y2="1"><stop offset="0" stop-color="#48d6ee"/><stop offset="1" stop-color="#1a86d6"/></linearGradient></defs><rect x="0.3" y="0.3" width="15.4" height="10.6" rx="0.8" fill="url(#mg)"/><path d="M8 11 V13.4 M4.6 13.8 H11.4" stroke="#c8c8c8" stroke-width="1.2"/></svg><div class="t" style="top:777.3px;font-size:12px;line-height:15px;color:#f0f0f0;left:55px;">This PC</div><svg style="left:21px;top:812px;" width="5" height="8" viewBox="0 0 5 8"><path d="M0.6 0.6 L4.4 4 L0.6 7.4" stroke="#c8c8c8" stroke-width="1.1" fill="none"/></svg><svg style="left:42px;top:808px;" width="15" height="14" viewBox="0 0 15 14"><rect x="0" y="0" width="3.2" height="3.2" fill="#2a9df4"/><rect x="3.8" y="0" width="3.2" height="3.2" fill="#2a9df4"/><rect x="0" y="3.8" width="3.2" height="3.2" fill="#2a9df4"/><rect x="3.8" y="3.8" width="3.2" height="3.2" fill="#2a9df4"/><path d="M2 7.5 L3.4 5.5 H11.6 L13.6 8 V12.5 Q13.6 13.4 12.6 13.4 H2.6 Q1.6 13.4 1.6 12.5 V8 Z" fill="#d8d8d8"/><rect x="1.6" y="10" width="12" height="3.4" rx="0.8" fill="#8c8c8c"/><rect x="3" y="11.2" width="1.2" height="1" fill="#3ce060"/></svg><div class="t" style="top:809.3px;font-size:12px;line-height:15px;color:#f0f0f0;left:63px;">OS (C:)</div><svg style="left:20px;top:845.5px;" width="9" height="5" viewBox="0 0 9 5"><path d="M0.6 0.6 L4.5 4.4 L8.4 0.6" stroke="#c8c8c8" stroke-width="1.1" fill="none"/></svg><svg style="left:42px;top:840px;" width="15" height="14" viewBox="0 0 15 14"><path d="M2 7.5 L3.4 5.5 H11.6 L13.6 8 V12.5 Q13.6 13.4 12.6 13.4 H2.6 Q1.6 13.4 1.6 12.5 V8 Z" fill="#d8d8d8"/><rect x="1.6" y="10" width="12" height="3.4" rx="0.8" fill="#8c8c8c"/><rect x="3" y="11.2" width="1.2" height="1" fill="#3ce060"/></svg><div class="t" style="top:841.3px;font-size:12px;line-height:15px;color:#f0f0f0;left:63px;">DATA (D:)</div><svg style="left:30px;top:876px;" width="5" height="8" viewBox="0 0 5 8"><path d="M0.6 0.6 L4.4 4 L0.6 7.4" stroke="#c8c8c8" stroke-width="1.1" fill="none"/></svg><svg style="left:50px;top:873px;" width="16" height="14" viewBox="0 0 16 14"><defs><linearGradient id="fg0" x1="0" y1="0" x2="0" y2="1"><stop offset="0" stop-color="#ffe37a"/><stop offset="1" stop-color="#f6c84a"/></linearGradient></defs><path d="M0.5 2 Q0.5 0.8 1.7 0.8 H5.8 L7.6 2.4 H14.3 Q15.5 2.4 15.5 3.6 V5 H0.5 Z" fill="#e8b228"/><path d="M0.5 4.2 H15.5 V12.4 Q15.5 13.4 14.5 13.4 H1.5 Q0.5 13.4 0.5 12.4 Z" fill="url(#fg0)"/></svg><div class="t" style="top:873.3px;font-size:12px;line-height:15px;color:#f0f0f0;left:71px;">.Trash-1000</div><svg style="left:30px;top:908px;" width="5" height="8" viewBox="0 0 5 8"><path d="M0.6 0.6 L4.4 4 L0.6 7.4" stroke="#c8c8c8" stroke-width="1.1" fill="none"/></svg><svg style="left:50px;top:905px;" width="16" height="14" viewBox="0 0 16 14"><defs><linearGradient id="fg0" x1="0" y1="0" x2="0" y2="1"><stop offset="0" stop-color="#ffe37a"/><stop offset="1" stop-color="#f6c84a"/></linearGradient></defs><path d="M0.5 2 Q0.5 0.8 1.7 0.8 H5.8 L7.6 2.4 H14.3 Q15.5 2.4 15.5 3.6 V5 H0.5 Z" fill="#e8b228"/><path d="M0.5 4.2 H15.5 V12.4 Q15.5 13.4 14.5 13.4 H1.5 Q0.5 13.4 0.5 12.4 Z" fill="url(#fg0)"/></svg><div class="t" style="top:905.3px;font-size:12px;line-height:15px;color:#f0f0f0;left:71px;">a</div><svg style="left:30px;top:940px;" width="5" height="8" viewBox="0 0 5 8"><path d="M0.6 0.6 L4.4 4 L0.6 7.4" stroke="#c8c8c8" stroke-width="1.1" fill="none"/></svg><svg style="left:50px;top:937px;" width="16" height="14" viewBox="0 0 16 14"><defs><linearGradient id="fg0" x1="0" y1="0" x2="0" y2="1"><stop offset="0" stop-color="#ffe37a"/><stop offset="1" stop-color="#f6c84a"/></linearGradient></defs><path d="M0.5 2 Q0.5 0.8 1.7 0.8 H5.8 L7.6 2.4 H14.3 Q15.5 2.4 15.5 3.6 V5 H0.5 Z" fill="#e8b228"/><path d="M0.5 4.2 H15.5 V12.4 Q15.5 13.4 14.5 13.4 H1.5 Q0.5 13.4 0.5 12.4 Z" fill="url(#fg0)"/></svg><div class="t" style="top:937.3px;font-size:12px;line-height:15px;color:#f0f0f0;left:71px;">Client DATA</div><svg style="left:50px;top:969px;" width="16" height="14" viewBox="0 0 16 14"><defs><linearGradient id="fg0" x1="0" y1="0" x2="0" y2="1"><stop offset="0" stop-color="#ffe37a"/><stop offset="1" stop-color="#f6c84a"/></linearGradient></defs><path d="M0.5 2 Q0.5 0.8 1.7 0.8 H5.8 L7.6 2.4 H14.3 Q15.5 2.4 15.5 3.6 V5 H0.5 Z" fill="#e8b228"/><path d="M0.5 4.2 H15.5 V12.4 Q15.5 13.4 14.5 13.4 H1.5 Q0.5 13.4 0.5 12.4 Z" fill="url(#fg0)"/></svg><div class="t" style="top:969.3px;font-size:12px;line-height:15px;color:#f0f0f0;left:71px;">DATABASE</div><div class="abs" style="left:159px;top:128px;width:1750px;height:853px;background:#1b1b1b"></div><div class="abs" style="left:1911px;top:145px;width:2px;height:620px;background:#8a8a8a;border-radius:1px"></div><svg style="left:167px;top:142.5px;" width="10" height="6" viewBox="0 0 10 6"><path d="M0.6 0.6 L5 5 L9.4 0.6" stroke="#bdbdbd" stroke-width="1.1" fill="none"/></svg><div class="t" style="top:136.8px;font-size:15px;line-height:19px;color:#e2e2e2;left:181px;-webkit-text-stroke:0.1px #e2e2e2">Today</div><div class="abs" style="left:174px;top:162px;width:104px;height:145px;background:#4d4d4d;border:1px solid #5e5e5e"></div><svg style="left:185px;top:175px;transform:scale(1.0);transform-origin:0 0" width="82" height="76" viewBox="0 0 82 76"><defs><linearGradient id="m1" x1="0" y1="0" x2="1" y2="1"><stop offset="0" stop-color="#44e4ee"/><stop offset="0.55" stop-color="#22a8dc"/><stop offset="1" stop-color="#0f6cc4"/></linearGradient><radialGradient id="m1d" cx="0.45" cy="0.4" r="0.6"><stop offset="0" stop-color="#f4f4f4"/><stop offset="0.7" stop-color="#d8d8d8"/><stop offset="1" stop-color="#bdbdbd"/></radialGradient></defs><rect x="0" y="0.5" width="81" height="2" rx="1" fill="#b8c4cc"/><rect x="0" y="2" width="81" height="57" rx="1" fill="url(#m1)"/><path d="M38 59 H48 V67.5 H60 Q61.5 67.5 61.5 69 V71 Q61.5 72.5 60 72.5 H38 Z" fill="#b4bcc4"/><rect x="38" y="71.5" width="23" height="1" fill="#8a949c"/><circle cx="20" cy="51" r="26" fill="url(#m1d)"/><path d="M20 51 L-4 43 A26 26 0 0 1 -3 40 Z" fill="#f0c0f0" opacity="0.6"/><path d="M20 51 L40 36 A26 26 0 0 1 42 39 Z" fill="#d0f0d0" opacity="0.6"/><path d="M20 51 L46 52 A26 26 0 0 1 22 77 Z" fill="#c4c4c4" opacity="0.7"/><circle cx="20" cy="51" r="8" fill="#3a8ee0"/><circle cx="20" cy="51" r="5.5" fill="none" stroke="#8cc4f4" stroke-width="0.8"/><circle cx="20" cy="51" r="2.4" fill="#0b62c8"/></svg><svg style="left:178px;top:164px;" width="13" height="13" viewBox="0 0 13 13"><rect x="0" y="0" width="13" height="13" rx="1.5" fill="#91b3aa"/><path d="M3 6.8 L5.4 9.2 L10.2 4" stroke="#1c2a26" stroke-width="1.2" fill="none"/></svg><div class="t" style="top:259.8px;font-size:12px;line-height:15px;color:#f2f2f2;left:26px;width:400px;text-align:center;">mattermost-desk</div><div class="t" style="top:274.8px;font-size:12px;line-height:15px;color:#f2f2f2;left:26px;width:400px;text-align:center;">top-5.9.0-win-x6</div><div class="t" style="top:289.8px;font-size:12px;line-height:15px;color:#f2f2f2;left:26px;width:400px;text-align:center;">4.msi</div><svg style="left:167px;top:318.0px;" width="10" height="6" viewBox="0 0 10 6"><path d="M0.6 0.6 L5 5 L9.4 0.6" stroke="#bdbdbd" stroke-width="1.1" fill="none"/></svg><div class="t" style="top:312.3px;font-size:15px;line-height:19px;color:#e2e2e2;left:181px;-webkit-text-stroke:0.1px #e2e2e2">Yesterday</div><svg style="left:195px;top:346px;" width="62" height="82" viewBox="0 0 62 82"><path d="M0.5 0.5 H44 L61.5 18 V81.5 H0.5 Z" fill="#f9f9f9" stroke="#8a8682" stroke-width="1"/><path d="M44 0.5 V18 H61.5" fill="#f0f0f0" stroke="#8a8682" stroke-width="1"/></svg><div class="t" style="top:435.8px;font-size:12px;line-height:15px;color:#f2f2f2;left:26px;width:400px;text-align:center;">file.enc</div><svg style="left:167px;top:464.5px;" width="10" height="6" viewBox="0 0 10 6"><path d="M0.6 0.6 L5 5 L9.4 0.6" stroke="#bdbdbd" stroke-width="1.1" fill="none"/></svg><div class="t" style="top:458.8px;font-size:15px;line-height:19px;color:#e2e2e2;left:181px;-webkit-text-stroke:0.1px #e2e2e2">Last week</div><svg style="left:201px;top:529px;" width="50" height="48" viewBox="0 0 50 48"><rect x="0" y="0" width="50" height="48" fill="#171717"/><path d="M13.5 17.5 A4.2 4.2 0 1 0 13.5 25" fill="none" stroke="#3ab0e8" stroke-width="1.6"/><path d="M13.5 24 A3.8 3.8 0 1 0 13.5 31.5" fill="none" stroke="#e8b830" stroke-width="1.6"/><path d="M13 16.5 L15.5 19 L13 21.5" stroke="#b040e0" stroke-width="1.4" fill="none"/><path d="M13 27 L15.5 29.5 L13 32" stroke="#f08020" stroke-width="1.4" fill="none"/><rect x="21" y="15" width="2" height="4.5" fill="#2a90e0"/><rect x="24" y="16" width="5" height="3.5" fill="#7050d0"/><rect x="30" y="15" width="4" height="4.5" fill="#d09030"/><rect x="35" y="15" width="4" height="4.5" fill="#50b040"/><rect x="21" y="22" width="18" height="0.8" fill="#4a4a4a"/><rect x="21" y="24.5" width="20" height="0.8" fill="#4a4a4a"/><rect x="21" y="30" width="12" height="0.8" fill="#6a8a60"/></svg><div class="t" style="top:581.8px;font-size:12px;line-height:15px;color:#f2f2f2;left:26px;width:400px;text-align:center;">FlavorGPT</div><div class="t" style="top:596.8px;font-size:12px;line-height:15px;color:#f2f2f2;left:26px;width:400px;text-align:center;">Preview B.png</div><svg style="left:309px;top:529px;" width="50" height="48" viewBox="0 0 50 48"><rect x="0" y="0" width="50" height="48" fill="#171717"/><path d="M13.5 17.5 A4.2 4.2 0 1 0 13.5 25" fill="none" stroke="#3ab0e8" stroke-width="1.6"/><path d="M13.5 24 A3.8 3.8 0 1 0 13.5 31.5" fill="none" stroke="#e8b830" stroke-width="1.6"/><path d="M13 16.5 L15.5 19 L13 21.5" stroke="#b040e0" stroke-width="1.4" fill="none"/><path d="M13 27 L15.5 29.5 L13 32" stroke="#f08020" stroke-width="1.4" fill="none"/><rect x="21" y="15" width="2" height="4.5" fill="#2a90e0"/><rect x="24" y="16" width="5" height="3.5" fill="#7050d0"/><rect x="30" y="15" width="4" height="4.5" fill="#d09030"/><rect x="35" y="15" width="4" height="4.5" fill="#50b040"/><rect x="21" y="22" width="18" height="0.8" fill="#4a4a4a"/><rect x="21" y="24.5" width="20" height="0.8" fill="#4a4a4a"/><rect x="21" y="28.5" width="10" height="1.4" fill="#cfcfcf"/></svg><div class="t" style="top:581.8px;font-size:12px;line-height:15px;color:#f2f2f2;left:134px;width:400px;text-align:center;">FlavorGPT</div><div class="t" style="top:596.8px;font-size:12px;line-height:15px;color:#f2f2f2;left:134px;width:400px;text-align:center;">Preview W.png</div><svg style="left:418px;top:529px;" width="48" height="48" viewBox="0 0 48 48"><defs><filter id="blr"><feGaussianBlur stdDeviation="4"/></filter><clipPath id="fpc"><rect x="0" y="0" width="48" height="48"/></clipPath></defs><g clip-path="url(#fpc)"><rect x="0" y="0" width="48" height="48" fill="#161618"/><g filter="url(#blr)"><rect x="6" y="0" width="10" height="14" fill="#404870"/><rect x="14" y="0" width="10" height="14" fill="#4030a0"/><rect x="24" y="0" width="10" height="14" fill="#a03070"/><rect x="34" y="0" width="10" height="14" fill="#8a7060"/><rect x="8" y="26" width="14" height="20" fill="#2a3440"/><rect x="28" y="24" width="14" height="22" fill="#4a3028"/></g></g></svg><div class="t" style="top:581.8px;font-size:12px;line-height:15px;color:#f2f2f2;left:242px;width:400px;text-align:center;">FlavorGPT</div><div class="t" style="top:596.8px;font-size:12px;line-height:15px;color:#f2f2f2;left:242px;width:400px;text-align:center;">Preview.png</div><svg style="left:504px;top:488px;" width="89" height="89" viewBox="0 0 89 89"><defs><linearGradient id="sg1" x1="0" y1="0" x2="1" y2="0"><stop offset="0" stop-color="#ffffff"/><stop offset="0.18" stop-color="#eaf2fc"/><stop offset="0.36" stop-color="#c6b8f2"/><stop offset="0.55" stop-color="#f6b4d2"/><stop offset="0.75" stop-color="#fde2c8"/><stop offset="1" stop-color="#ffffff"/></linearGradient><linearGradient id="sg2" x1="0" y1="0" x2="0" y2="1"><stop offset="0" stop-color="#fff" stop-opacity="0"/><stop offset="0.45" stop-color="#fff" stop-opacity="0.88"/><stop offset="1" stop-color="#fff" stop-opacity="0.55"/></linearGradient><linearGradient id="sg3" x1="0" y1="0" x2="1" y2="0"><stop offset="0" stop-color="#fff" stop-opacity="1"/><stop offset="0.12" stop-color="#fff" stop-opacity="0"/><stop offset="0.88" stop-color="#fff" stop-opacity="0"/><stop offset="1" stop-color="#fff" stop-opacity="1"/></linearGradient></defs><rect x="0" y="0" width="89" height="89" fill="#fff"/><rect x="0" y="21" width="89" height="47" fill="url(#sg1)"/><rect x="0" y="21" width="89" height="47" fill="url(#sg2)"/><rect x="0" y="21" width="89" height="47" fill="url(#sg3)"/></svg><div class="t" style="top:581.8px;font-size:12px;line-height:15px;color:#f2f2f2;left:350px;width:400px;text-align:center;">FlavorGPT</div><div class="t" style="top:596.8px;font-size:12px;line-height:15px;color:#f2f2f2;left:350px;width:400px;text-align:center;">Preview.svg</div><svg style="left:635px;top:534px;" width="46" height="43" viewBox="0 0 46 43"><rect x="0" y="0" width="46" height="43" fill="#fff"/><rect x="7" y="3" width="7" height="1.2" fill="#333"/><rect x="7" y="6" width="3" height="1" fill="#aaa"/><rect x="18" y="6" width="3" height="1" fill="#aaa"/><rect x="7" y="8" width="3" height="1" fill="#bbb"/><rect x="7" y="13" width="2" height="1" fill="#aaa"/><rect x="18" y="13" width="3" height="1" fill="#aaa"/><rect x="7" y="18" width="2" height="1" fill="#aaa"/><rect x="18" y="18" width="2" height="1" fill="#aaa"/><rect x="7" y="22" width="4" height="1" fill="#aaa"/><rect x="18" y="22" width="4" height="1" fill="#aaa"/><rect x="7" y="27" width="3" height="1" fill="#aaa"/><rect x="7" y="31" width="3" height="1" fill="#aaa"/><rect x="7" y="35" width="6" height="5" fill="#ddd"/><rect x="28" y="7" width="4" height="1" fill="#888"/><rect x="29" y="10" width="3" height="1" fill="#4a8ae0"/><rect x="29" y="13" width="3" height="1" fill="#4a8ae0"/><rect x="29" y="16" width="3" height="1" fill="#4a8ae0"/><rect x="29" y="19" width="3" height="1" fill="#4a8ae0"/><rect x="28" y="24" width="4" height="1" fill="#888"/><rect x="29" y="26" width="8" height="12" fill="#222"/><rect x="30" y="27" width="2" height="2" fill="#fff"/><rect x="33" y="29" width="2" height="3" fill="#fff"/><rect x="31" y="33" width="3" height="2" fill="#fff"/></svg><div class="t" style="top:581.8px;font-size:12px;line-height:15px;color:#f2f2f2;left:458px;width:400px;text-align:center;">chrome_J8sk1zrv</div><div class="t" style="top:596.8px;font-size:12px;line-height:15px;color:#f2f2f2;left:458px;width:400px;text-align:center;">WS.png</div><svg style="left:724px;top:486px;" width="84" height="96" viewBox="0 0 84 96"><defs><linearGradient id="p2" x1="0" y1="0" x2="1" y2="1"><stop offset="0" stop-color="#a8acb0"/><stop offset="1" stop-color="#c8ccd0"/></linearGradient></defs><path d="M17 0 H59 L84 25 V90 Q84 95 79 95 H17 Q12 95 12 90 V5 Q12 0 17 0 Z" fill="#e4e5e8"/><path d="M59 0 V20 Q59 25 64 25 H84 Z" fill="url(#p2)"/><path d="M64 25 H84 V42 Z" fill="#cfd2d6" opacity="0.8"/><rect x="12" y="47" width="59" height="37" fill="#cfd1d5"/><rect x="0" y="44.5" width="71" height="35.5" rx="2.5" fill="#e6ad48"/><text x="35.5" y="71" text-anchor="middle" font-family="Liberation Sans" font-weight="bold" font-size="21" fill="#fff" textLength="55" lengthAdjust="spacingAndGlyphs">JSON</text></svg><div class="t" style="top:581.8px;font-size:12px;line-height:15px;color:#f2f2f2;left:566px;width:400px;text-align:center;">yesbhautik.json</div><svg style="left:832px;top:486px;" width="84" height="96" viewBox="0 0 84 96"><defs><linearGradient id="p3" x1="0" y1="0" x2="1" y2="1"><stop offset="0" stop-color="#a8acb0"/><stop offset="1" stop-color="#c8ccd0"/></linearGradient></defs><path d="M17 0 H59 L84 25 V90 Q84 95 79 95 H17 Q12 95 12 90 V5 Q12 0 17 0 Z" fill="#e4e5e8"/><path d="M59 0 V20 Q59 25 64 25 H84 Z" fill="url(#p3)"/><path d="M64 25 H84 V42 Z" fill="#cfd2d6" opacity="0.8"/><rect x="12" y="47" width="59" height="37" fill="#cfd1d5"/><rect x="0" y="44.5" width="71" height="35.5" rx="2.5" fill="#e6ad48"/><text x="35.5" y="71" text-anchor="middle" font-family="Liberation Sans" font-weight="bold" font-size="21" fill="#fff" textLength="55" lengthAdjust="spacingAndGlyphs">JSON</text></svg><div class="t" style="top:581.8px;font-size:12px;line-height:15px;color:#f2f2f2;left:674px;width:400px;text-align:center;">brindadesings.js</div><div class="t" style="top:596.8px;font-size:12px;line-height:15px;color:#f2f2f2;left:674px;width:400px;text-align:center;">on</div><svg style="left:934px;top:486px;" width="95" height="95" viewBox="0 0 95 95"><rect x="0" y="0" width="95" height="95" fill="#121212"/><rect x="20" y="7" width="56" height="3" fill="#202020"/><rect x="11" y="14" width="18" height="3.5" fill="#9ab0a0"/><rect x="29" y="14" width="19" height="3.5" fill="#d8202a"/><rect x="48" y="14" width="18" height="3.5" fill="#3050c8"/><rect x="66" y="14" width="8" height="3.5" fill="#ddd"/><rect x="77" y="14" width="11" height="3.5" fill="#807830"/><rect x="40" y="20" width="18" height="3.5" fill="#2a7ae0"/><rect x="40" y="28" width="19" height="1" fill="#2a5088"/><rect x="10" y="31" width="76" height="1.2" fill="#383838"/><rect x="10" y="33.5" width="10" height="1" fill="#383838"/><rect x="10" y="37" width="58" height="1.2" fill="#383838"/><rect x="10" y="41" width="78" height="1.2" fill="#383838"/><rect x="10" y="43.5" width="34" height="1" fill="#383838"/><rect x="10" y="48" width="10" height="1.5" fill="#5a5a5a"/><rect x="10" y="52" width="13" height="1" fill="#2a5088"/><rect x="13" y="54" width="18" height="1" fill="#2a5088"/><rect x="10" y="57" width="9" height="1" fill="#2a5088"/><rect x="13" y="59.5" width="52" height="1" fill="#2a5088"/><rect x="10" y="63" width="24" height="1.5" fill="#5a5a5a"/><rect x="10" y="67" width="8" height="1" fill="#2a5088"/><rect x="13" y="69.5" width="10" height="1.5" fill="#2a5088"/></svg><svg style="left:998px;top:559px;" width="29" height="21" viewBox="0 0 29 21"><rect x="0" y="0" width="29" height="20.5" rx="4.5" fill="#b30b00"/><path d="M5 16.5 Q6 13 11 12.2 Q14 8 14.4 3.6 Q14.6 2.6 15 3.8 Q15.2 8 16.6 11.4 Q20 12.8 24.5 13 Q25.4 13.6 24 14 Q19 13.4 16 13 Q11.5 13.4 8.6 16 Q6.4 17.6 5 16.5 Z" fill="none" stroke="#fff" stroke-width="1.3" stroke-linejoin="round"/></svg><div class="t" style="top:581.8px;font-size:12px;line-height:15px;color:#f2f2f2;left:782px;width:400px;text-align:center;">Linkedin-api-pyt</div><div class="t" style="top:596.8px;font-size:12px;line-height:15px;color:#f2f2f2;left:782px;width:400px;text-align:center;">hon.pdf</div><svg style="left:1042px;top:486px;" width="95" height="95" viewBox="0 0 95 95"><rect x="0" y="0" width="95" height="95" fill="#121212"/><rect x="38" y="7" width="20" height="3" fill="#202020"/><rect x="10" y="13" width="14" height="1.2" fill="#2e2e2e"/><rect x="14" y="16.5" width="10" height="2.5" fill="#4a5a70"/><rect x="10" y="21" width="10" height="1.2" fill="#404040"/><rect x="10" y="25" width="70" height="1.2" fill="#484848"/><rect x="10" y="28" width="64" height="1.2" fill="#484848"/><rect x="10" y="31" width="36" height="1.2" fill="#404040"/><rect x="14" y="34" width="30" height="1" fill="#383838"/><rect x="14" y="38.5" width="76" height="2.5" fill="#242c38"/><rect x="17" y="43" width="50" height="1" fill="#404040"/><rect x="17" y="45.5" width="50" height="1" fill="#404040"/><rect x="14" y="50" width="74" height="1.5" fill="#5a4a5a"/><rect x="17" y="53" width="40" height="1" fill="#383838"/><rect x="18" y="57.5" width="72" height="2.5" fill="#242c38"/><rect x="22" y="62" width="55" height="1" fill="#404040"/><rect x="22" y="65" width="60" height="1" fill="#404040"/><rect x="22" y="68" width="62" height="1" fill="#404040"/><rect x="18" y="71.5" width="72" height="2.5" fill="#242c38"/><rect x="18" y="76.5" width="72" height="2.5" fill="#242c38"/><rect x="14" y="83" width="40" height="1.5" fill="#4a3a4a"/><rect x="18" y="90" width="20" height="2" fill="#242c38"/></svg><svg style="left:1106px;top:559px;" width="29" height="21" viewBox="0 0 29 21"><rect x="0" y="0" width="29" height="20.5" rx="4.5" fill="#b30b00"/><path d="M5 16.5 Q6 13 11 12.2 Q14 8 14.4 3.6 Q14.6 2.6 15 3.8 Q15.2 8 16.6 11.4 Q20 12.8 24.5 13 Q25.4 13.6 24 14 Q19 13.4 16 13 Q11.5 13.4 8.6 16 Q6.4 17.6 5 16.5 Z" fill="none" stroke="#fff" stroke-width="1.3" stroke-linejoin="round"/></svg><div class="t" style="top:581.8px;font-size:12px;line-height:15px;color:#f2f2f2;left:890px;width:400px;text-align:center;">API Docs —</div><div class="t" style="top:596.8px;font-size:12px;line-height:15px;color:#f2f2f2;left:890px;width:400px;text-align:center;">linkedin-api</div><div class="t" style="top:611.8px;font-size:12px;line-height:15px;color:#f2f2f2;left:890px;width:400px;text-align:center;">documentation.</div><div class="t" style="top:626.8px;font-size:12px;line-height:15px;color:#f2f2f2;left:890px;width:400px;text-align:center;">pdf</div><svg style="left:1150px;top:486px;" width="95" height="95" viewBox="0 0 95 95"><rect x="0" y="0" width="95" height="95" fill="#121212"/><rect x="36" y="7" width="24" height="3" fill="#202020"/><rect x="10" y="16" width="10" height="1" fill="#2e2e2e"/><rect x="12" y="20" width="50" height="1" fill="#404040"/><rect x="10" y="27" width="74" height="1.5" fill="#383838"/><rect x="10" y="30.5" width="30" height="1.5" fill="#383838"/><rect x="10" y="34" width="79" height="32" fill="#252b34" stroke="#4a5462" stroke-width="0.6"/><rect x="13" y="38" width="12" height="1" fill="#707070"/><rect x="13" y="41" width="32" height="1" fill="#707070"/><rect x="13" y="44.5" width="40" height="1" fill="#8a8448"/><rect x="17" y="47.5" width="60" height="1" fill="#5a8048"/><rect x="17" y="51" width="50" height="1" fill="#707070"/><rect x="17" y="54" width="68" height="1" fill="#5a8048"/><rect x="17" y="57" width="40" height="1" fill="#8a8448"/><rect x="17" y="60.5" width="56" height="1" fill="#5a8048"/><rect x="13" y="63" width="10" height="1" fill="#707070"/></svg><svg style="left:1214px;top:559px;" width="29" height="21" viewBox="0 0 29 21"><rect x="0" y="0" width="29" height="20.5" rx="4.5" fill="#b30b00"/><path d="M5 16.5 Q6 13 11 12.2 Q14 8 14.4 3.6 Q14.6 2.6 15 3.8 Q15.2 8 16.6 11.4 Q20 12.8 24.5 13 Q25.4 13.6 24 14 Q19 13.4 16 13 Q11.5 13.4 8.6 16 Q6.4 17.6 5 16.5 Z" fill="none" stroke="#fff" stroke-width="1.3" stroke-linejoin="round"/></svg><div class="t" style="top:581.8px;font-size:12px;line-height:15px;color:#f2f2f2;left:998px;width:400px;text-align:center;">Examples —</div><div class="t" style="top:596.8px;font-size:12px;line-height:15px;color:#f2f2f2;left:998px;width:400px;text-align:center;">linkedin-api</div><div class="t" style="top:611.8px;font-size:12px;line-height:15px;color:#f2f2f2;left:998px;width:400px;text-align:center;">documentation.</div><div class="t" style="top:626.8px;font-size:12px;line-height:15px;color:#f2f2f2;left:998px;width:400px;text-align:center;">pdf</div><svg style="left:1258px;top:486px;" width="95" height="95" viewBox="0 0 95 95"><rect x="0" y="0" width="95" height="95" fill="#121212"/><rect x="33" y="8" width="30" height="3" fill="#262626"/><rect x="9" y="17" width="14" height="1.2" fill="#262626"/><rect x="11" y="20.5" width="16" height="1" fill="#383838"/><rect x="10" y="30" width="32" height="1.5" fill="#262626"/><rect x="10" y="34" width="76" height="1.2" fill="#404040"/><rect x="10" y="36.5" width="8" height="1" fill="#383838"/><rect x="10" y="42" width="10" height="1.2" fill="#262626"/><rect x="10" y="47" width="80" height="1.2" fill="#484848"/><rect x="10" y="49.5" width="70" height="1" fill="#404040"/><rect x="10" y="52.5" width="80" height="4.5" fill="#3a4452" stroke="#505a68" stroke-width="0.5"/><rect x="12" y="54.5" width="58" height="1" fill="#707070"/><rect x="10" y="60" width="78" height="1.2" fill="#484848"/><rect x="10" y="62.5" width="76" height="1" fill="#404040"/><rect x="10" y="65" width="34" height="1" fill="#404040"/><rect x="10" y="69" width="14" height="1.2" fill="#262626"/><rect x="10" y="73" width="78" height="1" fill="#404040"/><rect x="10" y="75.5" width="60" height="1" fill="#2a5088"/><rect x="10" y="78" width="52" height="1" fill="#404040"/></svg><svg style="left:1322px;top:559px;" width="29" height="21" viewBox="0 0 29 21"><rect x="0" y="0" width="29" height="20.5" rx="4.5" fill="#b30b00"/><path d="M5 16.5 Q6 13 11 12.2 Q14 8 14.4 3.6 Q14.6 2.6 15 3.8 Q15.2 8 16.6 11.4 Q20 12.8 24.5 13 Q25.4 13.6 24 14 Q19 13.4 16 13 Q11.5 13.4 8.6 16 Q6.4 17.6 5 16.5 Z" fill="none" stroke="#fff" stroke-width="1.3" stroke-linejoin="round"/></svg><div class="t" style="top:581.8px;font-size:12px;line-height:15px;color:#f2f2f2;left:1106px;width:400px;text-align:center;">Key Concepts —</div><div class="t" style="top:596.8px;font-size:12px;line-height:15px;color:#f2f2f2;left:1106px;width:400px;text-align:center;">linkedin-api</div><div class="t" style="top:611.8px;font-size:12px;line-height:15px;color:#f2f2f2;left:1106px;width:400px;text-align:center;">documentation.</div><div class="t" style="top:626.8px;font-size:12px;line-height:15px;color:#f2f2f2;left:1106px;width:400px;text-align:center;">pdf</div><svg style="left:1366px;top:486px;" width="95" height="95" viewBox="0 0 95 95"><rect x="0" y="0" width="95" height="95" fill="#121212"/><rect x="20" y="7" width="56" height="3" fill="#202020"/><rect x="11" y="14" width="18" height="3.5" fill="#9ab0a0"/><rect x="29" y="14" width="19" height="3.5" fill="#d8202a"/><rect x="48" y="14" width="18" height="3.5" fill="#3050c8"/><rect x="66" y="14" width="8" height="3.5" fill="#ddd"/><rect x="77" y="14" width="11" height="3.5" fill="#807830"/><rect x="40" y="20" width="18" height="3.5" fill="#2a7ae0"/><rect x="40" y="28" width="19" height="1" fill="#2a5088"/><rect x="10" y="31" width="76" height="1.2" fill="#383838"/><rect x="10" y="33.5" width="10" height="1" fill="#383838"/><rect x="10" y="37" width="58" height="1.2" fill="#383838"/><rect x="10" y="41" width="78" height="1.2" fill="#383838"/><rect x="10" y="43.5" width="34" height="1" fill="#383838"/><rect x="10" y="48" width="10" height="1.5" fill="#5a5a5a"/><rect x="10" y="52" width="13" height="1" fill="#2a5088"/><rect x="13" y="54" width="18" height="1" fill="#2a5088"/><rect x="10" y="57" width="9" height="1" fill="#2a5088"/><rect x="13" y="59.5" width="52" height="1" fill="#2a5088"/><rect x="10" y="63" width="24" height="1.5" fill="#5a5a5a"/><rect x="10" y="67" width="8" height="1" fill="#2a5088"/><rect x="13" y="69.5" width="10" height="1.5" fill="#2a5088"/></svg><svg style="left:1430px;top:559px;" width="29" height="21" viewBox="0 0 29 21"><rect x="0" y="0" width="29" height="20.5" rx="4.5" fill="#b30b00"/><path d="M5 16.5 Q6 13 11 12.2 Q14 8 14.4 3.6 Q14.6 2.6 15 3.8 Q15.2 8 16.6 11.4 Q20 12.8 24.5 13 Q25.4 13.6 24 14 Q19 13.4 16 13 Q11.5 13.4 8.6 16 Q6.4 17.6 5 16.5 Z" fill="none" stroke="#fff" stroke-width="1.3" stroke-linejoin="round"/></svg><div class="t" style="top:581.8px;font-size:12px;line-height:15px;color:#f2f2f2;left:1214px;width:400px;text-align:center;">LinkedIn API for</div><div class="t" style="top:596.8px;font-size:12px;line-height:15px;color:#f2f2f2;left:1214px;width:400px;text-align:center;">Python —</div><div class="t" style="top:611.8px;font-size:12px;line-height:15px;color:#f2f2f2;left:1214px;width:400px;text-align:center;">linkedin-api</div><div class="t" style="top:626.8px;font-size:12px;line-height:15px;color:#f2f2f2;left:1214px;width:400px;text-align:center;">documentatio...</div><svg style="left:1476px;top:488px;" width="89" height="89" viewBox="0 0 89 89"><defs><radialGradient id="ig4a" cx="0.25" cy="1.05" r="1.1"><stop offset="0" stop-color="#ffd600"/><stop offset="0.25" stop-color="#ff8a00"/><stop offset="0.5" stop-color="#ff0169"/><stop offset="0.8" stop-color="#d300c5"/><stop offset="1" stop-color="#7638fa"/></radialGradient><linearGradient id="ig4b" x1="0" y1="0" x2="0.6" y2="0.5"><stop offset="0" stop-color="#7a3cff" stop-opacity="0.9"/><stop offset="1" stop-color="#7a3cff" stop-opacity="0"/></linearGradient></defs><rect x="0" y="0" width="89" height="89" fill="#fff"/><rect x="0.5" y="0.5" width="88" height="88" rx="21" fill="url(#ig4a)"/><rect x="0.5" y="0.5" width="88" height="88" rx="21" fill="url(#ig4b)"/><rect x="13.8" y="13.8" width="61.4" height="61.4" rx="17" fill="none" stroke="#fff" stroke-width="6"/><circle cx="44.5" cy="44.5" r="14.5" fill="none" stroke="#fff" stroke-width="6"/><circle cx="62.5" cy="27" r="4" fill="#fff"/></svg><div class="t" style="top:581.8px;font-size:12px;line-height:15px;color:#f2f2f2;left:1322px;width:400px;text-align:center;">test-image.jpg</div><svg style="left:1583px;top:487px;" width="93" height="93" viewBox="0 0 93 93"><rect x="0.5" y="0.5" width="92" height="92" fill="#1b1b1b" stroke="#3e3e3e" stroke-width="1"/></svg><svg style="left:1607.5px;top:516.0px;" width="44" height="34" viewBox="0 0 44 34"><rect x="0" y="0" width="44" height="34" fill="#000"/><rect x="3" y="3" width="38" height="28" fill="#fff"/><rect x="7" y="7" width="18" height="20" fill="#000"/><path d="M11 10.5 H21.5 V14 L17 24.5 H13.2 L17.2 14 H11 Z" fill="#fff"/><path d="M28 12.5 H38 V16 L32.4 23.2 H38.2 V27 H27.6 V23.6 L33.2 16.4 H28 Z" fill="#000"/></svg><div class="t" style="top:581.8px;font-size:12px;line-height:15px;color:#f2f2f2;left:1430px;width:400px;text-align:center;">gophish-v0.12.1-</div><div class="t" style="top:596.8px;font-size:12px;line-height:15px;color:#f2f2f2;left:1430px;width:400px;text-align:center;">windows-64bit.zi</div><div class="t" style="top:611.8px;font-size:12px;line-height:15px;color:#f2f2f2;left:1430px;width:400px;text-align:center;">p</div><svg style="left:1691px;top:487px;" width="93" height="93" viewBox="0 0 93 93"><rect x="0.5" y="0.5" width="92" height="92" fill="#1b1b1b" stroke="#3e3e3e" stroke-width="1"/></svg><svg style="left:1715.5px;top:516.0px;" width="44" height="34" viewBox="0 0 44 34"><rect x="0" y="0" width="44" height="34" fill="#000"/><rect x="3" y="3" width="38" height="28" fill="#fff"/><rect x="7" y="7" width="18" height="20" fill="#000"/><path d="M11 10.5 H21.5 V14 L17 24.5 H13.2 L17.2 14 H11 Z" fill="#fff"/><path d="M28 12.5 H38 V16 L32.4 23.2 H38.2 V27 H27.6 V23.6 L33.2 16.4 H28 Z" fill="#000"/></svg><div class="t" style="top:581.8px;font-size:12px;line-height:15px;color:#f2f2f2;left:1538px;width:400px;text-align:center;">gophish-v0.12.1-</div><div class="t" style="top:596.8px;font-size:12px;line-height:15px;color:#f2f2f2;left:1538px;width:400px;text-align:center;">linux-64bit.zip</div><svg style="left:1804px;top:486px;" width="84" height="96" viewBox="0 0 84 96"><defs><linearGradient id="p5" x1="0" y1="0" x2="1" y2="1"><stop offset="0" stop-color="#a8acb0"/><stop offset="1" stop-color="#c8ccd0"/></linearGradient></defs><path d="M17 0 H59 L84 25 V90 Q84 95 79 95 H17 Q12 95 12 90 V5 Q12 0 17 0 Z" fill="#e4e5e8"/><path d="M59 0 V20 Q59 25 64 25 H84 Z" fill="url(#p5)"/><path d="M64 25 H84 V42 Z" fill="#cfd2d6" opacity="0.8"/><rect x="12" y="47" width="59" height="37" fill="#cfd1d5"/><rect x="0" y="44.5" width="71" height="35.5" rx="2.5" fill="#5f6b73"/><text x="35.5" y="71" text-anchor="middle" font-family="Liberation Sans" font-weight="bold" font-size="21" fill="#fff" textLength="48" lengthAdjust="spacingAndGlyphs">TXT</text></svg><div class="t" style="top:581.8px;font-size:12px;line-height:15px;color:#f2f2f2;left:1646px;width:400px;text-align:center;">baileys_store.txt</div><svg style="left:195px;top:653px;" width="62" height="82" viewBox="0 0 62 82"><path d="M0.5 0.5 H44 L61.5 18 V81.5 H0.5 Z" fill="#f9f9f9" stroke="#8a8682" stroke-width="1"/><path d="M44 0.5 V18 H61.5" fill="#f0f0f0" stroke="#8a8682" stroke-width="1"/></svg><svg style="left:184px;top:673px;" width="70" height="42" viewBox="0 0 70 42"><rect x="0" y="0" width="42" height="41" rx="3.5" fill="#107c41"/><path d="M10.5 8 H17.5 L21 15.5 L24.5 8 H31.5 L24.6 20.5 L31.8 33 H24.8 L21 25.6 L17.2 33 H10.2 L17.4 20.5 Z" fill="#fff"/><text x="46" y="31" font-family="Liberation Sans" font-size="24" fill="#33c481" textLength="21" lengthAdjust="spacingAndGlyphs">a,</text></svg><div class="t" style="top:742.8px;font-size:12px;line-height:15px;color:#f2f2f2;left:26px;width:400px;text-align:center;">jsonformatter.cs</div><div class="t" style="top:757.8px;font-size:12px;line-height:15px;color:#f2f2f2;left:26px;width:400px;text-align:center;">v</div><svg style="left:287px;top:648px;" width="93" height="93" viewBox="0 0 93 93"><rect x="0.5" y="0.5" width="92" height="92" fill="#1b1b1b" stroke="#3e3e3e" stroke-width="1"/></svg><svg style="left:311.5px;top:677.0px;" width="44" height="34" viewBox="0 0 44 34"><rect x="0" y="0" width="44" height="34" fill="#000"/><rect x="3" y="3" width="38" height="28" fill="#fff"/><rect x="7" y="7" width="18" height="20" fill="#000"/><path d="M11 10.5 H21.5 V14 L17 24.5 H13.2 L17.2 14 H11 Z" fill="#fff"/><path d="M28 12.5 H38 V16 L32.4 23.2 H38.2 V27 H27.6 V23.6 L33.2 16.4 H28 Z" fill="#000"/></svg><div class="t" style="top:742.8px;font-size:12px;line-height:15px;color:#f2f2f2;left:134px;width:400px;text-align:center;">wa.zip</div><svg style="left:411px;top:653px;" width="62" height="82" viewBox="0 0 62 82"><path d="M0.5 0.5 H44 L61.5 18 V81.5 H0.5 Z" fill="#f9f9f9" stroke="#8a8682" stroke-width="1"/><path d="M44 0.5 V18 H61.5" fill="#f0f0f0" stroke="#8a8682" stroke-width="1"/></svg><svg style="left:401px;top:673px;" width="68" height="42" viewBox="0 0 68 42"><rect x="0" y="0" width="41.5" height="41" rx="3.5" fill="#185abd"/><path d="M6.5 9 H12 L15 25 L18.8 9 H23 L26.8 25 L29.8 9 H35.2 L29.6 33 H24.6 L20.9 17.5 L17.2 33 H12.2 Z" fill="#fff"/><rect x="43.5" y="11" width="23" height="2" fill="#41a5ee"/><rect x="43.5" y="17" width="23" height="2" fill="#2b7cd3"/><rect x="43.5" y="23" width="23" height="2" fill="#185abd"/><rect x="43.5" y="29" width="23" height="2" fill="#103f91"/></svg><div class="t" style="top:742.8px;font-size:12px;line-height:15px;color:#f2f2f2;left:242px;width:400px;text-align:center;">vajubhai</div><div class="t" style="top:757.8px;font-size:12px;line-height:15px;color:#f2f2f2;left:242px;width:400px;text-align:center;">krishanapark.doc</div><div class="t" style="top:772.8px;font-size:12px;line-height:15px;color:#f2f2f2;left:242px;width:400px;text-align:center;">x</div><svg style="left:502px;top:647px;" width="95" height="95" viewBox="0 0 95 95"><rect x="0" y="0" width="95" height="95" fill="#fff"/><rect x="0" y="4.5" width="95" height="1" fill="#f0a040"/><path d="M55 4 H95 V15 H51 Z" fill="#3a6ab0"/><rect x="58" y="6" width="28" height="1.2" fill="#c8d8f0"/><rect x="58" y="8.5" width="34" height="1" fill="#c8d8f0"/><rect x="58" y="11" width="30" height="1" fill="#c8d8f0"/><rect x="0" y="16" width="62" height="1.2" fill="#f0b050"/><rect x="62" y="14.5" width="33" height="3" fill="#f0b030"/><path d="M7 11 L10 7 L12 12 L14 7 L16 11" stroke="#e85020" stroke-width="1.5" fill="none"/><rect x="18" y="8" width="24" height="4" fill="#f4a070" opacity="0.7"/><rect x="17" y="13" width="20" height="1" fill="#888"/><rect x="10" y="28" width="2" height="1" fill="#555"/><rect x="62" y="30" width="6" height="1" fill="#555"/><rect x="10" y="75" width="8" height="1" fill="#555"/><rect x="10" y="78" width="20" height="1" fill="#666"/><rect x="10" y="80" width="3" height="1" fill="#555"/><rect x="0" y="88" width="72" height="7" fill="#3a6ab0"/><rect x="72" y="88" width="23" height="7" fill="#f0b030"/></svg><svg style="left:566px;top:720px;" width="29" height="21" viewBox="0 0 29 21"><rect x="0" y="0" width="29" height="20.5" rx="4.5" fill="#b30b00"/><path d="M5 16.5 Q6 13 11 12.2 Q14 8 14.4 3.6 Q14.6 2.6 15 3.8 Q15.2 8 16.6 11.4 Q20 12.8 24.5 13 Q25.4 13.6 24 14 Q19 13.4 16 13 Q11.5 13.4 8.6 16 Q6.4 17.6 5 16.5 Z" fill="none" stroke="#fff" stroke-width="1.3" stroke-linejoin="round"/></svg><div class="t" style="top:742.8px;font-size:12px;line-height:15px;color:#f2f2f2;left:350px;width:400px;text-align:center;">LetterHead.pdf</div><svg style="left:610px;top:647px;" width="95" height="95" viewBox="0 0 95 95"><rect x="0" y="0" width="95" height="95" fill="#fff"/><rect x="3.5" y="3.5" width="88" height="88" fill="none" stroke="#f0a080" stroke-width="0.8"/><path d="M14 8 L18 6 L20 11 L17 14 Z" fill="#e85030"/><path d="M21 7 L25 9 L23 13 Z" fill="#555"/><text x="52" y="13" text-anchor="middle" font-family="Liberation Sans" font-size="9" fill="none" stroke="#f08060" stroke-width="0.6" textLength="50" lengthAdjust="spacingAndGlyphs">VORTEX</text><rect x="35" y="15" width="35" height="1" fill="#ccc"/><rect x="11" y="17" width="18" height="1" fill="#e87050"/><rect x="57" y="17" width="10" height="1" fill="#f0a080"/><path d="M32 20 L44 21 L48 34 L52 50 L46 62 L48 78 L42 84 L38 70 L34 56 L18 52 L14 46 L24 42 L28 34 Z" fill="#f05030"/><path d="M58 20 L62 24 L64 36 L70 44 L76 52 L70 68 L66 80 L60 70 L55 56 L52 40 L54 30 Z" fill="#606460"/><rect x="11" y="19" width="35" height="1" fill="#333"/><rect x="11" y="22" width="26" height="1" fill="#333"/><rect x="11" y="25" width="18" height="1" fill="#333"/><rect x="11" y="28" width="24" height="1" fill="#333"/><rect x="11" y="31" width="22" height="1" fill="#333"/><g stroke="#222" stroke-width="0.6"><path d="M10 36 H85 M10 39 H85 M10 42 H85 M10 45 H85 M10 48 H85 M10 51 H85 M10 54 H85 M10 57 H85 M10 60 H85 M10 63 H85 M10 66 H85 M10 69 H85 M10 72 H85 M10 75 H85 M10 78 H85"/><path d="M10 36 V78 M20 36 V78 M52 36 V78 M70 36 V78 M85 36 V78"/></g><rect x="11" y="86" width="10" height="1" fill="#555"/></svg><svg style="left:674px;top:720px;" width="29" height="21" viewBox="0 0 29 21"><rect x="0" y="0" width="29" height="20.5" rx="4.5" fill="#b30b00"/><path d="M5 16.5 Q6 13 11 12.2 Q14 8 14.4 3.6 Q14.6 2.6 15 3.8 Q15.2 8 16.6 11.4 Q20 12.8 24.5 13 Q25.4 13.6 24 14 Q19 13.4 16 13 Q11.5 13.4 8.6 16 Q6.4 17.6 5 16.5 Z" fill="none" stroke="#fff" stroke-width="1.3" stroke-linejoin="round"/></svg><div class="t" style="top:742.8px;font-size:12px;line-height:15px;color:#f2f2f2;left:458px;width:400px;text-align:center;">bhatar center.pdf</div><svg style="left:725px;top:660px;" width="83" height="66" viewBox="0 0 83 66"><defs><linearGradient id="fb6" x1="0" y1="0" x2="1" y2="1"><stop offset="0" stop-color="#ffeaa6"/><stop offset="0.6" stop-color="#fdd86a"/><stop offset="1" stop-color="#fcc634"/></linearGradient></defs><path d="M0 5 Q0 0 5 0 H27 Q31 0 33 3 L37 8 H78 Q83 8 83 13 V30 H0 Z" fill="#f8b818"/><path d="M2 15 Q2 11 6 11 H36 L40 9 H78 Q81 9 81 12 V20 H2 Z" fill="#f4f4f0"/><path d="M0 17 Q0 13 4 13 H35 L39 9.5 H78 Q83 9.5 83 14.5 V61 Q83 66 78 66 H5 Q0 66 0 61 Z" fill="url(#fb6)"/></svg><div class="t" style="top:742.8px;font-size:12px;line-height:15px;color:#f2f2f2;left:566px;width:400px;text-align:center;">Compressed</div><svg style="left:167px;top:801.5px;" width="10" height="6" viewBox="0 0 10 6"><path d="M0.6 0.6 L5 5 L9.4 0.6" stroke="#bdbdbd" stroke-width="1.1" fill="none"/></svg><div class="t" style="top:795.8px;font-size:15px;line-height:19px;color:#e2e2e2;left:181px;-webkit-text-stroke:0.1px #e2e2e2">Last month</div><svg style="left:179px;top:824px;" width="93" height="93" viewBox="0 0 93 93"><rect x="0.5" y="0.5" width="92" height="92" fill="#1b1b1b" stroke="#3e3e3e" stroke-width="1"/></svg><svg style="left:203.5px;top:853.0px;" width="44" height="34" viewBox="0 0 44 34"><rect x="0" y="0" width="44" height="34" fill="#000"/><rect x="3" y="3" width="38" height="28" fill="#fff"/><rect x="7" y="7" width="18" height="20" fill="#000"/><path d="M11 10.5 H21.5 V14 L17 24.5 H13.2 L17.2 14 H11 Z" fill="#fff"/><path d="M28 12.5 H38 V16 L32.4 23.2 H38.2 V27 H27.6 V23.6 L33.2 16.4 H28 Z" fill="#000"/></svg><div class="t" style="top:918.8px;font-size:12px;line-height:15px;color:#f2f2f2;left:26px;width:400px;text-align:center;">saveweb2zip-co</div><div class="t" style="top:933.8px;font-size:12px;line-height:15px;color:#f2f2f2;left:26px;width:400px;text-align:center;">m-www-harness</div><div class="t" style="top:948.8px;font-size:12px;line-height:15px;color:#f2f2f2;left:26px;width:400px;text-align:center;">-io.zip</div><svg style="left:303px;top:829px;" width="62" height="82" viewBox="0 0 62 82"><path d="M0.5 0.5 H44 L61.5 18 V81.5 H0.5 Z" fill="#f9f9f9" stroke="#8a8682" stroke-width="1"/><path d="M44 0.5 V18 H61.5" fill="#f0f0f0" stroke="#8a8682" stroke-width="1"/></svg><svg style="left:292px;top:849px;" width="70" height="42" viewBox="0 0 70 42"><rect x="0" y="0" width="42" height="41" rx="3.5" fill="#107c41"/><path d="M10.5 8 H17.5 L21 15.5 L24.5 8 H31.5 L24.6 20.5 L31.8 33 H24.8 L21 25.6 L17.2 33 H10.2 L17.4 20.5 Z" fill="#fff"/><rect x="44" y="13.5" width="9" height="3.6" fill="#21a366"/><rect x="55" y="13.5" width="11" height="3.6" fill="#33c481"/><rect x="44" y="19.5" width="9" height="3.6" fill="#107c41"/><rect x="55" y="19.5" width="11" height="3.6" fill="#21a366"/><rect x="44" y="25.5" width="9" height="3.6" fill="#185c37"/><rect x="55" y="25.5" width="11" height="3.6" fill="#107c41"/></svg><div class="t" style="top:918.8px;font-size:12px;line-height:15px;color:#f2f2f2;left:134px;width:400px;text-align:center;">voucher.xlsx</div><svg style="left:411px;top:829px;" width="62" height="82" viewBox="0 0 62 82"><path d="M0.5 0.5 H44 L61.5 18 V81.5 H0.5 Z" fill="#f9f9f9" stroke="#8a8682" stroke-width="1"/><path d="M44 0.5 V18 H61.5" fill="#f0f0f0" stroke="#8a8682" stroke-width="1"/></svg><div class="t" style="top:918.8px;font-size:12px;line-height:15px;color:#f2f2f2;left:242px;width:400px;text-align:center;">Homem_Aranha.</div><div class="t" style="top:933.8px;font-size:12px;line-height:15px;color:#f2f2f2;left:242px;width:400px;text-align:center;">cdr</div><svg style="left:504px;top:825px;" width="88" height="89" viewBox="0 0 88 89"><rect x="0" y="0" width="88" height="89" rx="3" fill="#050505"/><rect x="5" y="5" width="25" height="21" fill="#b8d0dc"/><rect x="31" y="5" width="24" height="21" fill="#060a0c"/><rect x="56" y="5" width="25" height="21" fill="#060a0c"/><rect x="5" y="2" width="16" height="0.8" fill="#777"/><rect x="8" y="27.5" width="16" height="0.6" fill="#666"/><rect x="36" y="27.5" width="14" height="0.6" fill="#666"/><rect x="62" y="27.5" width="14" height="0.6" fill="#666"/><rect x="5" y="34" width="25" height="21" fill="#b8d0dc"/><rect x="31" y="34" width="24" height="21" fill="#060a0c"/><rect x="56" y="34" width="25" height="21" fill="#060a0c"/><rect x="5" y="31" width="16" height="0.8" fill="#777"/><rect x="8" y="56.5" width="16" height="0.6" fill="#666"/><rect x="36" y="56.5" width="14" height="0.6" fill="#666"/><rect x="62" y="56.5" width="14" height="0.6" fill="#666"/><rect x="5" y="63" width="25" height="21" fill="#b8d0dc"/><rect x="31" y="63" width="24" height="21" fill="#060a0c"/><rect x="56" y="63" width="25" height="21" fill="#060a0c"/><rect x="5" y="60" width="16" height="0.8" fill="#777"/><rect x="8" y="85.5" width="16" height="0.6" fill="#666"/><rect x="36" y="85.5" width="14" height="0.6" fill="#666"/><rect x="62" y="85.5" width="14" height="0.6" fill="#666"/><circle cx="17.5" cy="15.5" r="7" fill="none" stroke="#3a70a0" stroke-width="2.2" stroke-dasharray="1.5 1.2"/><circle cx="43" cy="15.5" r="7.5" fill="none" stroke="#30c0d8" stroke-width="1.6" stroke-dasharray="1.5 1.2"/><circle cx="68.5" cy="15.5" r="7.5" fill="none" stroke="#28a0b8" stroke-width="1.4" stroke-dasharray="1 1"/><path d="M9 37 L17.5 52 L26 37" fill="none" stroke="#2a5a90" stroke-width="3"/><path d="M35 37 L43 51 L51 37" fill="none" stroke="#30c8e0" stroke-width="1.8" stroke-dasharray="2 1"/><path d="M60 37 L68.5 51 L77 37" fill="none" stroke="#30c8e0" stroke-width="1.8" stroke-dasharray="2 1"/><path d="M23 66 A8 8 0 1 0 23 80" fill="none" stroke="#2a6aa0" stroke-width="3"/><path d="M47 66 A7 7 0 1 0 47 80" fill="none" stroke="#30b0c8" stroke-width="1.4" stroke-dasharray="1.5 1"/><path d="M72 66 A7 7 0 1 0 72 80" fill="none" stroke="#30b0c8" stroke-width="1.4" stroke-dasharray="1.5 1"/></svg><div class="t" style="top:918.8px;font-size:12px;line-height:15px;color:#f2f2f2;left:350px;width:400px;text-align:center;">Group 37.png</div><svg style="left:612px;top:825px;" width="88" height="89" viewBox="0 0 88 89"><rect x="0.5" y="0.5" width="87" height="88" fill="#1b1b1b" stroke="#3c3c3c" stroke-width="1"/></svg><div class="t" style="top:918.8px;font-size:12px;line-height:15px;color:#f2f2f2;left:458px;width:400px;text-align:center;">Rectangle 6.png</div><svg style="left:720px;top:825px;" width="88" height="89" viewBox="0 0 88 89"><rect x="0.5" y="0.5" width="87" height="88" fill="#1b1b1b" stroke="#3c3c3c" stroke-width="1"/></svg><div class="t" style="top:918.8px;font-size:12px;line-height:15px;color:#f2f2f2;left:566px;width:400px;text-align:center;">Rectangle 7.png</div><svg style="left:838px;top:826px;" width="72" height="88" viewBox="0 0 72 88"><path d="M8.5 1.5 H50.5 L70.5 17.5 V78.5 Q70.5 86.5 62.5 86.5 H9.5 Q1.5 86.5 1.5 78.5 V9.5 Q1.5 1.5 9.5 1.5 Z" fill="#330000" stroke="#ff9a00" stroke-width="3" stroke-linejoin="round"/><text x="35" y="48.5" text-anchor="middle" font-family="Liberation Sans" font-weight="bold" font-size="43" fill="#ff9a00" textLength="37" lengthAdjust="spacingAndGlyphs">Ai</text><text x="35.5" y="75.5" text-anchor="middle" font-family="Liberation Sans" font-size="17" fill="#fff" textLength="14" lengthAdjust="spacingAndGlyphs">AI</text></svg><div class="t" style="top:918.8px;font-size:12px;line-height:15px;color:#f2f2f2;left:674px;width:400px;text-align:center;">AdobeStock_594</div><div class="t" style="top:933.8px;font-size:12px;line-height:15px;color:#f2f2f2;left:674px;width:400px;text-align:center;">399656</div><div class="t" style="top:948.8px;font-size:12px;line-height:15px;color:#f2f2f2;left:674px;width:400px;text-align:center;">[Converted].ai</div><svg style="left:936px;top:825px;" width="89" height="89" viewBox="0 0 89 89"><defs><radialGradient id="m2bg" cx="0.6" cy="0.45" r="0.75"><stop offset="0" stop-color="#ffffff"/><stop offset="1" stop-color="#d4e2ec"/></radialGradient></defs><rect x="0" y="0" width="89" height="89" fill="url(#m2bg)"/><circle cx="46" cy="45" r="32" fill="none" stroke="#5a9ccc" stroke-width="1.6" opacity="0.8"/><circle cx="20.3" cy="63.0" r="1.9" fill="#4a9ad4"/><circle cx="15.7" cy="37.1" r="3.5" fill="#15508a"/><circle cx="21.3" cy="59.5" r="3.3" fill="#15508a"/><circle cx="18.9" cy="30.2" r="2.8" fill="#2a78b8"/><circle cx="23.2" cy="61.8" r="3.0" fill="#15508a"/><circle cx="35.3" cy="14.4" r="1.4" fill="#4a9ad4"/><circle cx="38.2" cy="76.4" r="1.8" fill="#3a8ccc"/><circle cx="13.6" cy="36.8" r="4.3" fill="#15508a"/><circle cx="11.8" cy="46.2" r="2.7" fill="#2a78b8"/><circle cx="50.9" cy="15.7" r="1.1" fill="#2a78b8"/><circle cx="18.2" cy="61.6" r="2.9" fill="#3a8ccc"/><circle cx="11.2" cy="42.9" r="3.2" fill="#4a9ad4"/><circle cx="21.2" cy="25.7" r="4.0" fill="#1a5a9a"/><circle cx="48.9" cy="11.2" r="2.1" fill="#2a78b8"/><circle cx="32.2" cy="19.4" r="2.6" fill="#4a9ad4"/><circle cx="18.6" cy="26.2" r="2.2" fill="#4a9ad4"/><circle cx="21.9" cy="58.3" r="2.3" fill="#15508a"/><circle cx="33.0" cy="74.9" r="1.4" fill="#2a78b8"/><circle cx="40.9" cy="76.3" r="1.2" fill="#1a5a9a"/><circle cx="38.1" cy="76.0" r="0.8" fill="#4a9ad4"/><circle cx="12.5" cy="54.3" r="3.7" fill="#4a9ad4"/><circle cx="23.7" cy="60.8" r="1.2" fill="#1a5a9a"/><circle cx="27.6" cy="29.1" r="2.1" fill="#15508a"/><circle cx="19.9" cy="56.5" r="2.8" fill="#3a8ccc"/><circle cx="12.5" cy="56.6" r="3.4" fill="#15508a"/><circle cx="11.2" cy="48.6" r="2.5" fill="#4a9ad4"/><circle cx="31.9" cy="22.5" r="3.6" fill="#4a9ad4"/><circle cx="17.7" cy="60.1" r="2.8" fill="#3a8ccc"/><circle cx="19.4" cy="41.8" r="2.5" fill="#3a8ccc"/><circle cx="41.9" cy="76.5" r="1.3" fill="#1a5a9a"/><circle cx="14.6" cy="48.3" r="1.9" fill="#3a8ccc"/><circle cx="14.0" cy="37.7" r="2.7" fill="#3a8ccc"/><circle cx="36.8" cy="19.9" r="1.4" fill="#1a5a9a"/><circle cx="60.4" cy="17.2" r="1.3" fill="#4a9ad4"/><circle cx="26.3" cy="27.7" r="2.1" fill="#3a8ccc"/><circle cx="47.2" cy="15.0" r="2.3" fill="#1a5a9a"/><circle cx="39.9" cy="18.3" r="2.3" fill="#2a78b8"/><circle cx="19.8" cy="54.5" r="3.2" fill="#2a78b8"/><circle cx="14.7" cy="54.1" r="2.9" fill="#1a5a9a"/><circle cx="32.3" cy="72.6" r="1.4" fill="#2a78b8"/><circle cx="11.0" cy="40.7" r="2.1" fill="#3a8ccc"/><circle cx="36.6" cy="18.1" r="2.4" fill="#3a8ccc"/><circle cx="23.7" cy="62.2" r="2.2" fill="#2a78b8"/><circle cx="13.6" cy="56.0" r="2.7" fill="#3a8ccc"/><circle cx="12.7" cy="53.0" r="1.6" fill="#4a9ad4"/><circle cx="20.2" cy="50.7" r="2.1" fill="#3a8ccc"/><circle cx="14.6" cy="38.0" r="2.6" fill="#4a9ad4"/><circle cx="10.1" cy="44.4" r="2.0" fill="#1a5a9a"/><circle cx="12.1" cy="35.8" r="3.6" fill="#4a9ad4"/><circle cx="9.7" cy="41.0" r="4.2" fill="#2a78b8"/><circle cx="39.5" cy="76.0" r="1.6" fill="#4a9ad4"/><circle cx="60.6" cy="16.7" r="1.8" fill="#1a5a9a"/><circle cx="49.0" cy="11.4" r="1.2" fill="#2a78b8"/><circle cx="37.9" cy="76.6" r="1.6" fill="#2a78b8"/><circle cx="53.6" cy="12.8" r="1.7" fill="#1a5a9a"/><circle cx="22.7" cy="38.3" r="3.2" fill="#2a78b8"/><circle cx="27.9" cy="19.9" r="2.4" fill="#4a9ad4"/><circle cx="31.6" cy="71.2" r="2.4" fill="#4a9ad4"/><circle cx="12.8" cy="36.0" r="2.8" fill="#2a78b8"/><circle cx="29.1" cy="73.5" r="1.1" fill="#2a78b8"/><circle cx="40.8" cy="11.3" r="2.7" fill="#1a5a9a"/><circle cx="16.3" cy="35.7" r="3.0" fill="#3a8ccc"/><circle cx="19.2" cy="62.3" r="2.3" fill="#1a5a9a"/><circle cx="12.8" cy="36.5" r="1.7" fill="#1a5a9a"/><circle cx="40.2" cy="18.0" r="1.3" fill="#15508a"/><circle cx="62.0" cy="16.9" r="0.8" fill="#4a9ad4"/><circle cx="22.5" cy="37.4" r="2.0" fill="#15508a"/><circle cx="26.1" cy="20.5" r="2.3" fill="#2a78b8"/><circle cx="63.1" cy="18.2" r="0.8" fill="#1a5a9a"/><circle cx="33.6" cy="18.0" r="1.5" fill="#2a78b8"/><circle cx="38.3" cy="75.7" r="1.6" fill="#4a9ad4"/><circle cx="12.0" cy="48.1" r="3.1" fill="#15508a"/><circle cx="37.1" cy="75.7" r="1.8" fill="#3a8ccc"/><circle cx="13.1" cy="43.1" r="2.9" fill="#2a78b8"/><circle cx="23.2" cy="63.5" r="2.3" fill="#15508a"/><circle cx="23.7" cy="62.3" r="1.2" fill="#3a8ccc"/><circle cx="10.9" cy="48.9" r="3.5" fill="#3a8ccc"/><circle cx="29.6" cy="72.8" r="2.4" fill="#4a9ad4"/><circle cx="41.2" cy="13.1" r="2.5" fill="#4a9ad4"/><circle cx="14.9" cy="29.4" r="3.8" fill="#15508a"/><circle cx="27.1" cy="71.8" r="1.1" fill="#1a5a9a"/><circle cx="18.9" cy="27.1" r="2.7" fill="#1a5a9a"/><circle cx="12.4" cy="52.9" r="1.5" fill="#1a5a9a"/><circle cx="27.1" cy="16.5" r="3.6" fill="#4a9ad4"/><circle cx="21.3" cy="55.1" r="3.6" fill="#4a9ad4"/><circle cx="15.1" cy="32.3" r="2.1" fill="#1a5a9a"/><circle cx="57.0" cy="16.6" r="1.2" fill="#4a9ad4"/><circle cx="26.5" cy="65.9" r="2.8" fill="#2a78b8"/><circle cx="13.4" cy="39.0" r="4.4" fill="#3a8ccc"/><circle cx="17.0" cy="49.0" r="2.4" fill="#15508a"/><circle cx="60.8" cy="17.1" r="1.0" fill="#15508a"/><circle cx="47.3" cy="11.1" r="1.7" fill="#4a9ad4"/><circle cx="37.0" cy="13.9" r="2.3" fill="#15508a"/><circle cx="27.1" cy="69.3" r="2.5" fill="#2a78b8"/><circle cx="32.2" cy="74.4" r="2.2" fill="#4a9ad4"/><circle cx="59.3" cy="16.0" r="1.9" fill="#2a78b8"/><circle cx="21.3" cy="58.6" r="2.5" fill="#3a8ccc"/><circle cx="57.9" cy="14.6" r="1.5" fill="#3a8ccc"/><circle cx="26.7" cy="16.4" r="2.8" fill="#4a9ad4"/><circle cx="24.5" cy="28.3" r="2.2" fill="#1a5a9a"/><circle cx="16.5" cy="61.1" r="1.7" fill="#4a9ad4"/><circle cx="17.9" cy="49.6" r="3.4" fill="#2a78b8"/><circle cx="13.1" cy="43.4" r="3.5" fill="#2a78b8"/><circle cx="11.8" cy="36.9" r="4.1" fill="#4a9ad4"/><circle cx="39.9" cy="77.0" r="0.8" fill="#15508a"/><circle cx="39.8" cy="11.7" r="1.2" fill="#2a78b8"/><circle cx="52.7" cy="13.6" r="2.1" fill="#1a5a9a"/><circle cx="60.4" cy="15.9" r="1.1" fill="#2a78b8"/><circle cx="40.1" cy="17.3" r="2.4" fill="#1a5a9a"/><circle cx="53.4" cy="15.3" r="2.2" fill="#3a8ccc"/><circle cx="26.3" cy="65.8" r="2.5" fill="#1a5a9a"/><circle cx="32.4" cy="74.8" r="1.3" fill="#3a8ccc"/><circle cx="12.9" cy="39.2" r="2.6" fill="#1a5a9a"/><circle cx="17.0" cy="52.6" r="2.6" fill="#2a78b8"/><circle cx="24.7" cy="19.3" r="2.7" fill="#2a78b8"/><circle cx="24.6" cy="33.0" r="2.5" fill="#15508a"/><circle cx="30.1" cy="74.0" r="2.3" fill="#1a5a9a"/><circle cx="16.2" cy="30.6" r="3.7" fill="#3a8ccc"/><circle cx="37.9" cy="16.8" r="2.6" fill="#3a8ccc"/><circle cx="30.6" cy="74.5" r="1.4" fill="#4a9ad4"/><circle cx="24.4" cy="33.7" r="3.1" fill="#3a8ccc"/><circle cx="36.6" cy="74.7" r="1.8" fill="#2a78b8"/><circle cx="24.9" cy="19.3" r="1.8" fill="#3a8ccc"/><circle cx="52.6" cy="13.6" r="1.1" fill="#4a9ad4"/><circle cx="28.6" cy="70.1" r="2.2" fill="#4a9ad4"/><circle cx="18.4" cy="43.4" r="2.1" fill="#15508a"/><circle cx="20.2" cy="54.1" r="1.5" fill="#2a78b8"/><circle cx="37.1" cy="15.0" r="2.7" fill="#3a8ccc"/><circle cx="32.6" cy="72.6" r="1.0" fill="#2a78b8"/><circle cx="38.4" cy="75.8" r="1.1" fill="#4a9ad4"/><circle cx="17.9" cy="50.3" r="2.5" fill="#4a9ad4"/><circle cx="43.5" cy="16.8" r="2.0" fill="#1a5a9a"/><circle cx="26.9" cy="70.5" r="2.1" fill="#4a9ad4"/><circle cx="39.5" cy="12.9" r="1.5" fill="#2a78b8"/><circle cx="19.0" cy="26.7" r="2.7" fill="#2a78b8"/><circle cx="26.1" cy="28.7" r="2.6" fill="#2a78b8"/><circle cx="23.9" cy="32.6" r="2.2" fill="#3a8ccc"/><circle cx="18.2" cy="48.6" r="3.6" fill="#15508a"/><circle cx="53.0" cy="12.4" r="1.5" fill="#4a9ad4"/><circle cx="54.1" cy="15.2" r="1.6" fill="#4a9ad4"/><circle cx="69.7" cy="65.2" r="1.8" fill="#3a88c4"/><circle cx="78.4" cy="46.1" r="1.7" fill="#3a88c4"/><circle cx="46.3" cy="11.9" r="1.6" fill="#3a88c4"/><circle cx="78.0" cy="46.9" r="1.4" fill="#3a88c4"/><circle cx="65.2" cy="19.3" r="0.8" fill="#3a88c4"/><circle cx="78.5" cy="47.9" r="1.3" fill="#3a88c4"/><circle cx="78.3" cy="55.2" r="1.9" fill="#3a88c4"/><circle cx="60.4" cy="15.1" r="1.5" fill="#3a88c4"/><circle cx="51.3" cy="14.0" r="1.1" fill="#3a88c4"/><circle cx="54.2" cy="13.9" r="1.9" fill="#3a88c4"/><circle cx="75.4" cy="29.0" r="1.6" fill="#3a88c4"/><circle cx="60.4" cy="14.8" r="1.5" fill="#3a88c4"/><circle cx="48.2" cy="77.8" r="1.7" fill="#3a88c4"/><circle cx="76.2" cy="31.1" r="1.9" fill="#3a88c4"/><circle cx="54.9" cy="75.5" r="1.7" fill="#3a88c4"/><circle cx="76.4" cy="46.1" r="0.9" fill="#3a88c4"/><circle cx="53.9" cy="15.2" r="1.0" fill="#3a88c4"/><circle cx="78.7" cy="47.5" r="1.4" fill="#3a88c4"/><circle cx="78.1" cy="39.5" r="1.2" fill="#3a88c4"/><circle cx="79.0" cy="44.0" r="1.3" fill="#3a88c4"/><circle cx="64.9" cy="17.2" r="1.7" fill="#3a88c4"/><circle cx="75.5" cy="34.1" r="1.4" fill="#3a88c4"/><circle cx="74.4" cy="57.2" r="0.8" fill="#3a88c4"/><circle cx="67.2" cy="19.5" r="1.0" fill="#3a88c4"/><circle cx="76.7" cy="43.6" r="1.1" fill="#3a88c4"/><circle cx="63.0" cy="18.3" r="1.0" fill="#3a88c4"/><circle cx="48.8" cy="14.7" r="1.0" fill="#3a88c4"/><circle cx="76.2" cy="46.7" r="0.8" fill="#3a88c4"/><circle cx="77.5" cy="42.3" r="1.6" fill="#3a88c4"/><circle cx="51.3" cy="13.8" r="1.3" fill="#3a88c4"/><circle cx="49.0" cy="11.3" r="1.1" fill="#3a88c4"/><circle cx="55.8" cy="14.6" r="1.0" fill="#3a88c4"/><circle cx="73.6" cy="59.9" r="0.9" fill="#3a88c4"/><circle cx="51.6" cy="12.6" r="1.1" fill="#3a88c4"/><circle cx="62.1" cy="72.5" r="1.9" fill="#3a88c4"/><circle cx="72.0" cy="28.2" r="1.1" fill="#3a88c4"/><circle cx="59.9" cy="74.4" r="1.2" fill="#3a88c4"/><circle cx="56.0" cy="13.8" r="2.0" fill="#3a88c4"/><circle cx="73.7" cy="56.5" r="0.8" fill="#3a88c4"/><circle cx="55.1" cy="15.7" r="0.8" fill="#3a88c4"/><path d="M31.3 73.4 L25.9 84.0" stroke="#2a70b0" stroke-width="0.8"/><circle cx="25.9" cy="84.0" r="2.2" fill="#3a88c8"/><path d="M74.2 60.1 L82.3 64.4" stroke="#2a70b0" stroke-width="0.8"/><circle cx="82.3" cy="64.4" r="2.2" fill="#3a88c8"/><path d="M65.9 70.1 L72.6 78.6" stroke="#2a70b0" stroke-width="0.8"/><circle cx="72.6" cy="78.6" r="2.2" fill="#3a88c8"/><path d="M78.0 43.4 L91.4 42.7" stroke="#2a70b0" stroke-width="0.8"/><circle cx="91.4" cy="42.7" r="2.2" fill="#3a88c8"/><path d="M70.2 65.9 L76.4 71.3" stroke="#2a70b0" stroke-width="0.8"/><circle cx="76.4" cy="71.3" r="2.2" fill="#3a88c8"/><path d="M15.5 35.4 L4.4 31.9" stroke="#2a70b0" stroke-width="0.8"/><circle cx="4.4" cy="31.9" r="2.2" fill="#3a88c8"/><path d="M69.4 66.8 L75.7 72.6" stroke="#2a70b0" stroke-width="0.8"/><circle cx="75.7" cy="72.6" r="2.2" fill="#3a88c8"/><path d="M14.9 37.3 L2.2 34.2" stroke="#2a70b0" stroke-width="0.8"/><circle cx="2.2" cy="34.2" r="2.2" fill="#3a88c8"/><path d="M22.7 66.9 L15.2 74.0" stroke="#2a70b0" stroke-width="0.8"/><circle cx="15.2" cy="74.0" r="2.2" fill="#3a88c8"/><path d="M17.5 30.5 L6.7 25.0" stroke="#2a70b0" stroke-width="0.8"/><circle cx="6.7" cy="25.0" r="2.2" fill="#3a88c8"/><path d="M71.5 64.3 L78.7 69.8" stroke="#2a70b0" stroke-width="0.8"/><circle cx="78.7" cy="69.8" r="2.2" fill="#3a88c8"/><path d="M75.4 32.4 L86.8 27.5" stroke="#2a70b0" stroke-width="0.8"/><circle cx="86.8" cy="27.5" r="2.2" fill="#3a88c8"/><path d="M77.7 49.1 L89.0 50.6" stroke="#2a70b0" stroke-width="0.8"/><circle cx="89.0" cy="50.6" r="2.2" fill="#3a88c8"/><path d="M72.0 63.6 L80.3 69.5" stroke="#2a70b0" stroke-width="0.8"/><circle cx="80.3" cy="69.5" r="2.2" fill="#3a88c8"/></svg><div class="t" style="top:918.8px;font-size:12px;line-height:15px;color:#f2f2f2;left:782px;width:400px;text-align:center;">m2m377xc.png</div><svg style="left:1063px;top:864px;" width="53" height="49" viewBox="0 0 53 49"><defs><linearGradient id="bhg" x1="0" y1="0" x2="1" y2="1"><stop offset="0" stop-color="#0c1a2a"/><stop offset="1" stop-color="#0a2238"/></linearGradient></defs><rect x="0" y="0" width="53" height="49" fill="url(#bhg)"/><rect x="0" y="0" width="53" height="2.5" fill="#1a1a1a"/><rect x="2" y="1" width="8" height="1" fill="#888"/><rect x="3" y="5" width="13" height="41" rx="2" fill="#1e2a48"/><rect x="4" y="7" width="11" height="4" fill="#806a40" opacity="0.7"/><rect x="2" y="9" width="2" height="6" fill="#a03030" opacity="0.6"/><rect x="15" y="9" width="2" height="6" fill="#a03030" opacity="0.6"/><circle cx="9.5" cy="21" r="2.6" fill="#d070a0"/><rect x="8" y="24" width="3" height="7" fill="#6a5050"/><rect x="6" y="35" width="8" height="3" fill="#2a3040"/><rect x="18" y="5" width="33" height="41" fill="#0e2840" opacity="0.8"/><rect x="21" y="10" width="24" height="1" fill="#9aa"/><rect x="21" y="12.5" width="12" height="1" fill="#778"/><rect x="21" y="17.5" width="18" height="1" fill="#8a9"/><rect x="21" y="26" width="3" height="2.5" fill="#2a70c0"/><rect x="25" y="26" width="5" height="2.5" fill="#2a70c0"/><rect x="21" y="33" width="28" height="1" fill="#99a"/><rect x="21" y="41" width="7" height="2" fill="#20a070"/><rect x="40" y="36" width="10" height="8" fill="#123450"/></svg><div class="t" style="top:918.8px;font-size:12px;line-height:15px;color:#f2f2f2;left:890px;width:400px;text-align:center;">BHAUTIK.png</div><svg style="left:1151px;top:824px;" width="93" height="93" viewBox="0 0 93 93"><rect x="0.5" y="0.5" width="92" height="92" fill="#1b1b1b" stroke="#3e3e3e" stroke-width="1"/></svg><svg style="left:1175.5px;top:853.0px;" width="44" height="34" viewBox="0 0 44 34"><rect x="0" y="0" width="44" height="34" fill="#000"/><rect x="3" y="3" width="38" height="28" fill="#fff"/><rect x="7" y="7" width="18" height="20" fill="#000"/><path d="M11 10.5 H21.5 V14 L17 24.5 H13.2 L17.2 14 H11 Z" fill="#fff"/><path d="M28 12.5 H38 V16 L32.4 23.2 H38.2 V27 H27.6 V23.6 L33.2 16.4 H28 Z" fill="#000"/></svg><div class="t" style="top:918.8px;font-size:12px;line-height:15px;color:#f2f2f2;left:998px;width:400px;text-align:center;">yashvidotdev_As</div><div class="t" style="top:933.8px;font-size:12px;line-height:15px;color:#f2f2f2;left:998px;width:400px;text-align:center;">signmentRepo-</div><div class="t" style="top:948.8px;font-size:12px;line-height:15px;color:#f2f2f2;left:998px;width:400px;text-align:center;">main.zip</div><svg style="left:1270px;top:826px;" width="72" height="88" viewBox="0 0 72 88"><path d="M8.5 1.5 H50.5 L70.5 17.5 V78.5 Q70.5 86.5 62.5 86.5 H9.5 Q1.5 86.5 1.5 78.5 V9.5 Q1.5 1.5 9.5 1.5 Z" fill="#330000" stroke="#ff9a00" stroke-width="3" stroke-linejoin="round"/><text x="35" y="48.5" text-anchor="middle" font-family="Liberation Sans" font-weight="bold" font-size="43" fill="#ff9a00" textLength="37" lengthAdjust="spacingAndGlyphs">Ai</text><text x="35.5" y="75.5" text-anchor="middle" font-family="Liberation Sans" font-size="17" fill="#fff" textLength="14" lengthAdjust="spacingAndGlyphs">AI</text></svg><div class="t" style="top:918.8px;font-size:12px;line-height:15px;color:#f2f2f2;left:1106px;width:400px;text-align:center;">AdobeStock_594</div><div class="t" style="top:933.8px;font-size:12px;line-height:15px;color:#f2f2f2;left:1106px;width:400px;text-align:center;">399656</div><div class="t" style="top:948.8px;font-size:12px;line-height:15px;color:#f2f2f2;left:1106px;width:400px;text-align:center;">[Converted]</div><div class="t" style="top:963.8px;font-size:12px;line-height:15px;color:#f2f2f2;left:1106px;width:400px;text-align:center;">copy.ai</div><svg style="left:1378px;top:826px;" width="72" height="88" viewBox="0 0 72 88"><path d="M8.5 1.5 H50.5 L70.5 17.5 V78.5 Q70.5 86.5 62.5 86.5 H9.5 Q1.5 86.5 1.5 78.5 V9.5 Q1.5 1.5 9.5 1.5 Z" fill="#330000" stroke="#ff9a00" stroke-width="3" stroke-linejoin="round"/><text x="35" y="48.5" text-anchor="middle" font-family="Liberation Sans" font-weight="bold" font-size="43" fill="#ff9a00" textLength="37" lengthAdjust="spacingAndGlyphs">Ai</text><text x="35.5" y="75.5" text-anchor="middle" font-family="Liberation Sans" font-size="17" fill="#fff" textLength="14" lengthAdjust="spacingAndGlyphs">AI</text></svg><div class="t" style="top:918.8px;font-size:12px;line-height:15px;color:#f2f2f2;left:1214px;width:400px;text-align:center;">AdobeStock_684</div><div class="t" style="top:933.8px;font-size:12px;line-height:15px;color:#f2f2f2;left:1214px;width:400px;text-align:center;">425862.ai</div><svg style="left:1486px;top:826px;" width="72" height="88" viewBox="0 0 72 88"><path d="M8.5 1.5 H50.5 L70.5 17.5 V78.5 Q70.5 86.5 62.5 86.5 H9.5 Q1.5 86.5 1.5 78.5 V9.5 Q1.5 1.5 9.5 1.5 Z" fill="#330000" stroke="#ff9a00" stroke-width="3" stroke-linejoin="round"/><text x="35" y="48.5" text-anchor="middle" font-family="Liberation Sans" font-weight="bold" font-size="43" fill="#ff9a00" textLength="37" lengthAdjust="spacingAndGlyphs">Ai</text><text x="35.5" y="75.5" text-anchor="middle" font-family="Liberation Sans" font-size="17" fill="#fff" textLength="14" lengthAdjust="spacingAndGlyphs">AI</text></svg><div class="t" style="top:918.8px;font-size:12px;line-height:15px;color:#f2f2f2;left:1322px;width:400px;text-align:center;">AdobeStock_684</div><div class="t" style="top:933.8px;font-size:12px;line-height:15px;color:#f2f2f2;left:1322px;width:400px;text-align:center;">401528.ai</div><svg style="left:1594px;top:826px;" width="72" height="88" viewBox="0 0 72 88"><path d="M8.5 1.5 H50.5 L70.5 17.5 V78.5 Q70.5 86.5 62.5 86.5 H9.5 Q1.5 86.5 1.5 78.5 V9.5 Q1.5 1.5 9.5 1.5 Z" fill="#330000" stroke="#ff9a00" stroke-width="3" stroke-linejoin="round"/><text x="35" y="48.5" text-anchor="middle" font-family="Liberation Sans" font-weight="bold" font-size="43" fill="#ff9a00" textLength="37" lengthAdjust="spacingAndGlyphs">Ai</text><text x="35.5" y="75.5" text-anchor="middle" font-family="Liberation Sans" font-size="17" fill="#fff" textLength="14" lengthAdjust="spacingAndGlyphs">AI</text></svg><div class="t" style="top:918.8px;font-size:12px;line-height:15px;color:#f2f2f2;left:1430px;width:400px;text-align:center;">AdobeStock_594</div><div class="t" style="top:933.8px;font-size:12px;line-height:15px;color:#f2f2f2;left:1430px;width:400px;text-align:center;">399656 - Copy.ai</div><svg style="left:1702px;top:826px;" width="72" height="88" viewBox="0 0 72 88"><path d="M8.5 1.5 H50.5 L70.5 17.5 V78.5 Q70.5 86.5 62.5 86.5 H9.5 Q1.5 86.5 1.5 78.5 V9.5 Q1.5 1.5 9.5 1.5 Z" fill="#330000" stroke="#ff9a00" stroke-width="3" stroke-linejoin="round"/><text x="35" y="48.5" text-anchor="middle" font-family="Liberation Sans" font-weight="bold" font-size="43" fill="#ff9a00" textLength="37" lengthAdjust="spacingAndGlyphs">Ai</text><text x="35.5" y="75.5" text-anchor="middle" font-family="Liberation Sans" font-size="17" fill="#fff" textLength="14" lengthAdjust="spacingAndGlyphs">AI</text></svg><div class="t" style="top:918.8px;font-size:12px;line-height:15px;color:#f2f2f2;left:1538px;width:400px;text-align:center;">AdobeStock_594</div><div class="t" style="top:933.8px;font-size:12px;line-height:15px;color:#f2f2f2;left:1538px;width:400px;text-align:center;">399656.ai</div><svg style="left:1799px;top:824px;" width="93" height="93" viewBox="0 0 93 93"><rect x="0.5" y="0.5" width="92" height="92" fill="#1b1b1b" stroke="#3e3e3e" stroke-width="1"/></svg><svg style="left:1823.5px;top:853.0px;" width="44" height="34" viewBox="0 0 44 34"><rect x="0" y="0" width="44" height="34" fill="#000"/><rect x="3" y="3" width="38" height="28" fill="#fff"/><rect x="7" y="7" width="18" height="20" fill="#000"/><path d="M11 10.5 H21.5 V14 L17 24.5 H13.2 L17.2 14 H11 Z" fill="#fff"/><path d="M28 12.5 H38 V16 L32.4 23.2 H38.2 V27 H27.6 V23.6 L33.2 16.4 H28 Z" fill="#000"/></svg><div class="t" style="top:918.8px;font-size:12px;line-height:15px;color:#f2f2f2;left:1646px;width:400px;text-align:center;">DOCUMENT.zip</div><svg style="left:511px;top:282px;" width="18" height="29" viewBox="0 0 18 29"><path d="M1.4 1.3 V22.6 L5.7 18.2 L9.7 27 L13.6 25.4 L10 16.7 L16.4 16.5 Z" fill="#000" stroke="#fff" stroke-width="1.1" stroke-linejoin="miter"/></svg><div class="abs" style="left:0px;top:981px;width:1920px;height:1px;background:#2a2a2a"></div><div class="abs" style="left:0px;top:982px;width:1920px;height:57px;background:#151515"></div><svg style="left:22px;top:991px;transform:scale(0.545);transform-origin:0 0" width="82" height="76" viewBox="0 0 82 76"><defs><linearGradient id="m7" x1="0" y1="0" x2="1" y2="1"><stop offset="0" stop-color="#44e4ee"/><stop offset="0.55" stop-color="#22a8dc"/><stop offset="1" stop-color="#0f6cc4"/></linearGradient><radialGradient id="m7d" cx="0.45" cy="0.4" r="0.6"><stop offset="0" stop-color="#f4f4f4"/><stop offset="0.7" stop-color="#d8d8d8"/><stop offset="1" stop-color="#bdbdbd"/></radialGradient></defs><rect x="0" y="0.5" width="81" height="2" rx="1" fill="#b8c4cc"/><rect x="0" y="2" width="81" height="57" rx="1" fill="url(#m7)"/><path d="M38 59 H48 V67.5 H60 Q61.5 67.5 61.5 69 V71 Q61.5 72.5 60 72.5 H38 Z" fill="#b4bcc4"/><rect x="38" y="71.5" width="23" height="1" fill="#8a949c"/><circle cx="20" cy="51" r="26" fill="url(#m7d)"/><path d="M20 51 L-4 43 A26 26 0 0 1 -3 40 Z" fill="#f0c0f0" opacity="0.6"/><path d="M20 51 L40 36 A26 26 0 0 1 42 39 Z" fill="#d0f0d0" opacity="0.6"/><path d="M20 51 L46 52 A26 26 0 0 1 22 77 Z" fill="#c4c4c4" opacity="0.7"/><circle cx="20" cy="51" r="8" fill="#3a8ee0"/><circle cx="20" cy="51" r="5.5" fill="none" stroke="#8cc4f4" stroke-width="0.8"/><circle cx="20" cy="51" r="2.4" fill="#0b62c8"/></svg><div class="t" style="top:989.3px;font-size:12.5px;line-height:16px;color:#f4f4f4;left:83px;letter-spacing:0.25px">mattermost-desktop-5.9.0-win-x64.msi</div><div class="t" style="top:1008.3px;font-size:12px;line-height:15px;color:#d4d4d4;left:83px;letter-spacing:-0.15px">Windows Installer Package</div><div class="t" style="top:990.3px;font-size:12px;line-height:15px;color:#d0d0d0;right:1533px;">Date modified:</div><div class="t" style="top:990.3px;font-size:12px;line-height:15px;color:#f4f4f4;left:399px;letter-spacing:-0.33px">04-11-2024 20:36</div><div class="t" style="top:1008.3px;font-size:12px;line-height:15px;color:#d0d0d0;right:1533px;">Size:</div><div class="t" style="top:1008.3px;font-size:12px;line-height:15px;color:#f4f4f4;left:399px;">88.9 MB</div><div class="t" style="top:990.3px;font-size:12px;line-height:15px;color:#d0d0d0;right:1325px;">Date created:</div><div class="t" style="top:990.3px;font-size:12px;line-height:15px;color:#f4f4f4;left:607px;letter-spacing:-0.33px">04-11-2024 20:36</div><div class="abs" style="left:0px;top:1039px;width:1920px;height:41px;background:linear-gradient(90deg,#1e2020 0px,#1e2222 300px,#1c2024 600px,#201c26 850px,#221c24 1100px,#241c20 1350px,#221c1c 1600px,#201c1c 1920px)"></div><div class="abs" style="left:0px;top:1039px;width:1920px;height:1px;background:#101010"></div><div class="abs" style="left:286px;top:1040px;width:79px;height:39px;background:rgba(255,255,255,0.12);border-radius:4px"></div><div class="abs" style="left:56px;top:1078px;width:66px;height:2px;background:#a8cfc6;border-radius:1px"></div><div class="abs" style="left:134px;top:1078px;width:67px;height:2px;background:#a8cfc6;border-radius:1px"></div><div class="abs" style="left:213px;top:1078px;width:67px;height:2px;background:#a8cfc6;border-radius:1px"></div><div class="abs" style="left:292px;top:1078px;width:67px;height:2px;background:#a8cfc6;border-radius:1px"></div><div class="abs" style="left:371px;top:1078px;width:66px;height:2px;background:#a8cfc6;border-radius:1px"></div><div class="abs" style="left:492px;top:1078px;width:67px;height:2px;background:#a8cfc6;border-radius:1px"></div><div class="abs" style="left:571px;top:1078px;width:67px;height:2px;background:#a8cfc6;border-radius:1px"></div><div class="abs" style="left:650px;top:1078px;width:67px;height:2px;background:#a8cfc6;border-radius:1px"></div><div class="abs" style="left:772px;top:1078px;width:67px;height:2px;background:#a8cfc6;border-radius:1px"></div><div class="abs" style="left:851px;top:1078px;width:66px;height:2px;background:#a8cfc6;border-radius:1px"></div><div class="abs" style="left:929px;top:1078px;width:67px;height:2px;background:#a8cfc6;border-radius:1px"></div><div class="abs" style="left:1008px;top:1078px;width:67px;height:2px;background:#a8cfc6;border-radius:1px"></div><div class="abs" style="left:1087px;top:1078px;width:67px;height:2px;background:#a8cfc6;border-radius:1px"></div><div class="abs" style="left:1166px;top:1078px;width:66px;height:2px;background:#a8cfc6;border-radius:1px"></div><div class="abs" style="left:1244px;top:1078px;width:67px;height:2px;background:#a8cfc6;border-radius:1px"></div><div class="abs" style="left:1323px;top:1078px;width:67px;height:2px;background:#a8cfc6;border-radius:1px"></div><div class="abs" style="left:1402px;top:1078px;width:67px;height:2px;background:#a8cfc6;border-radius:1px"></div><div class="abs" style="left:1481px;top:1078px;width:67px;height:2px;background:#a8cfc6;border-radius:1px"></div><svg style="left:13px;top:1049px;" width="21" height="21" viewBox="0 0 21 21"><defs><linearGradient id="clg" x1="0" y1="0" x2="0" y2="1"><stop offset="0" stop-color="#20d096"/><stop offset="1" stop-color="#0e9a6c"/></linearGradient></defs><g fill="url(#clg)"><path d="M10 10 H4.5 Q0.2 10 0.2 5.2 Q0.2 0.2 5 0.2 Q10 0.2 10 4.8 Z"/><path d="M11 10 H16.5 Q20.8 10 20.8 5.2 Q20.8 0.2 16 0.2 Q11 0.2 11 4.8 Z"/><path d="M10 11 H4.5 Q0.2 11 0.2 15.8 Q0.2 20.8 5 20.8 Q10 20.8 10 16.2 Z"/><path d="M11 11 H16.5 Q20.8 11 20.8 15.8 Q20.8 20.8 16 20.8 Q11 20.8 11 16.2 Z"/></g></svg><svg style="left:63px;top:1049px;" width="19" height="22" viewBox="0 0 19 22"><rect x="0.5" y="1.5" width="18" height="19.5" rx="1.5" fill="#e6e6e6" stroke="#9a9a9a" stroke-width="0.8"/><rect x="0.5" y="18" width="18" height="3" fill="#bdbdbd"/><path d="M3 0.5 V3 M6 0.5 V3 M9 0.5 V3 M12 0.5 V3 M15 0.5 V3" stroke="#777" stroke-width="0.9"/><path d="M3.5 14 V7 L8 14 V7" stroke="#555" stroke-width="2" fill="none"/><rect x="10" y="12" width="5" height="2" fill="#555"/></svg><div class="t" style="top:1053.3px;font-size:12px;line-height:15px;color:#f2f2f2;left:88px;">Unt...</div><svg style="left:138px;top:1048px;" width="23" height="23" viewBox="0 0 23 23"><circle cx="11.5" cy="11.5" r="11" fill="#1ed760"/><path d="M5.5 8.4 Q12 6 18 9.2 M6.3 11.8 Q11.8 9.8 16.8 12.4 M7 15 Q11.6 13.6 15.6 15.6" stroke="#121212" stroke-width="1.8" fill="none" stroke-linecap="round"/></svg><div class="t" style="top:1053.3px;font-size:12px;line-height:15px;color:#f2f2f2;left:166px;">Dav...</div><svg style="left:217px;top:1048px;" width="24" height="24" viewBox="0 0 24 24"><circle cx="12" cy="12" r="11.5" fill="#1a5a6a"/><path d="M6.5 17 V11 Q6.5 5.5 12 5.5 Q17.5 5.5 17.5 11 V17 M9 17 V13 M15 17 V13 M6.5 11 H17.5" stroke="#e8f0f0" stroke-width="1.6" fill="none"/></svg><div class="t" style="top:1053.3px;font-size:12px;line-height:15px;color:#f2f2f2;left:245px;">Ra...</div><svg style="left:300px;top:1049px;" width="16" height="21" viewBox="0 0 16 21"><path d="M8 0.5 V14.5 M2 8.5 L8 14.8 L14 8.5" stroke="#2ac8a8" stroke-width="1.7" fill="none"/><path d="M1 19.5 H15" stroke="#20b89a" stroke-width="1.8"/></svg><div class="t" style="top:1053.3px;font-size:12px;line-height:15px;color:#f2f2f2;left:324px;">Do...</div><svg style="left:377px;top:1050px;" width="20" height="20" viewBox="0 0 20 20"><rect x="0" y="0" width="20" height="20" rx="4" fill="#0a0a0a"/><path d="M10 4 L15.5 7 V13 L10 16 L4.5 13 V7 Z" fill="#ddd"/><path d="M10 10 L15.5 7 M10 10 V16 M10 10 L4.5 7" stroke="#0a0a0a" stroke-width="1"/></svg><div class="t" style="top:1053.3px;font-size:12px;line-height:15px;color:#f2f2f2;left:403px;">des...</div><svg style="left:452px;top:1048px;" width="24" height="24" viewBox="0 0 24 24"><path d="M17 1 L23 4 V20 L17 23 L6 13.5 L2.5 16.5 L0.5 15.5 V8.5 L2.5 7.5 L6 10.5 Z M17 7 L10 12 L17 17 Z" fill="#23c4a0"/></svg><svg style="left:497px;top:1049px;" width="22" height="22" viewBox="0 0 22 22"><circle cx="11" cy="11" r="10.3" fill="#22305a" stroke="#aab4d0" stroke-width="1"/><path d="M7 13 Q5 9 8.5 8 Q10 5.5 12.5 7 Q16 6.5 15.5 10.5 Q16.5 13.5 13 14 H8.5 Q7 14 7 13 Z" fill="none" stroke="#c8d0f0" stroke-width="1"/></svg><div class="t" style="top:1053.3px;font-size:12px;line-height:15px;color:#f2f2f2;left:525px;">Ter...</div><svg style="left:575px;top:1047px;" width="26" height="26" viewBox="0 0 26 26"><circle cx="11" cy="14" r="10.5" fill="#db4437"/><path d="M11 14 L1.5 9 A10.5 10.5 0 0 0 8 24 Z" fill="#0f9d58"/><path d="M11 14 L8 24 A10.5 10.5 0 0 0 21 17 Z" fill="#ffcd40"/><circle cx="11" cy="14" r="4.5" fill="#fff"/><circle cx="11" cy="14" r="3.5" fill="#4285f4"/><circle cx="18" cy="7" r="7" fill="#f8c020"/><circle cx="18" cy="5.5" r="3" fill="#8a4a30"/><path d="M12.5 12 Q18 8 23.5 12 V14 H12.5 Z" fill="#c04040"/><rect x="6" y="15" width="11" height="5" rx="1" fill="#333"/><text x="7" y="19" font-family="Liberation Sans" font-size="4.5" fill="#fff">Beta</text></svg><div class="t" style="top:1053.3px;font-size:12px;line-height:15px;color:#f2f2f2;left:603px;">mat...</div><svg style="left:656px;top:1049px;" width="22" height="24" viewBox="0 0 22 24"><path d="M3 2 L7 0.5 H15 L19 2 L21 6 L19 15 L11 22 L3 15 L1 6 Z" fill="#1a8cf0"/><path d="M7 7 Q11 9 15 7 L15.5 12 L11 17 L6.5 12 Z" fill="#fff"/><rect x="11" y="17" width="10" height="6" rx="1" fill="#ccc"/></svg><div class="t" style="top:1053.3px;font-size:12px;line-height:15px;color:#f2f2f2;left:682px;">niss...</div><svg style="left:732px;top:1048px;" width="24" height="24" viewBox="0 0 24 24"><circle cx="12" cy="12" r="12" fill="#f6a930"/><path d="M6.5 8 Q9 6.5 10 6.8 L10.5 7.8 Q12 7.4 13.5 7.8 L14 6.8 Q15 6.5 17.5 8 Q19.5 11.5 19 16 Q17 17.5 15.5 17.5 L14.7 16.3 Q12 17 9.3 16.3 L8.5 17.5 Q7 17.5 5 16 Q4.5 11.5 6.5 8 Z" fill="#fff"/><circle cx="9.6" cy="12.3" r="1.4" fill="#f6a930"/><circle cx="14.4" cy="12.3" r="1.4" fill="#f6a930"/></svg><svg style="left:777px;top:1048px;" width="25" height="24" viewBox="0 0 25 24"><circle cx="11" cy="13" r="10.5" fill="#2aa0e0"/><path d="M4.5 12.5 L17 8 L15 17.5 L11.5 15 L9.5 17 L9.5 14 Z" fill="#fff"/><rect x="10" y="2" width="15" height="10" rx="3" fill="#e02a2a"/><text x="11.5" y="10.3" font-family="Liberation Sans" font-size="8" fill="#fff">.59</text></svg><div class="t" style="top:1053.3px;font-size:12px;line-height:15px;color:#f2f2f2;left:805px;">Tro...</div><svg style="left:855px;top:1048px;" width="24" height="24" viewBox="0 0 24 24"><rect x="0" y="0" width="24" height="24" rx="4" fill="#080808"/><path d="M5 18 V12 M8.5 18 V8 M12 18 V5 M15.5 18 V9 M19 18 V13" stroke="#aaa" stroke-width="2.2"/></svg><div class="t" style="top:1053.3px;font-size:12px;line-height:15px;color:#f2f2f2;left:883px;">FxS...</div><svg style="left:934px;top:1048px;" width="22" height="24" viewBox="0 0 22 24"><path d="M0.5 2 H15 L19 5 V23.5 H0.5 Z" fill="#e8f0e0" stroke="#8a9a80" stroke-width="0.8"/><rect x="1.5" y="10" width="16.5" height="13" fill="#60c030"/><path d="M3 5 H7 M3 7.5 H11" stroke="#555" stroke-width="1.2"/><path d="M21 1 L11 15" stroke="#f0a020" stroke-width="2.5"/></svg><div class="t" style="top:1053.3px;font-size:12px;line-height:15px;color:#f2f2f2;left:961px;">D:\...</div><svg style="left:1013px;top:1049px;" width="22" height="22" viewBox="0 0 22 22"><circle cx="11" cy="11" r="10.6" fill="#fff"/><circle cx="11" cy="11" r="9" fill="#1a8cff"/><circle cx="11" cy="11" r="7" fill="#fff"/><rect x="9.6" y="5.5" width="2.8" height="11" rx="1" fill="#0a2a6a"/></svg><div class="t" style="top:1053.3px;font-size:12px;line-height:15px;color:#f2f2f2;left:1040px;">Bha...</div><svg style="left:1092px;top:1049px;" width="22" height="22" viewBox="0 0 22 22"><defs><linearGradient id="ghg" x1="0" y1="0" x2="0" y2="1"><stop offset="0" stop-color="#a030c8"/><stop offset="1" stop-color="#6a30a8"/></linearGradient></defs><circle cx="11" cy="11" r="11" fill="url(#ghg)"/><circle cx="11" cy="11" r="8" fill="#f4f0f6"/><path d="M7.5 18.6 V15.6 Q5.2 14.4 5.2 11 Q5.2 9.2 6.2 8.2 Q6 6.6 6.6 5.4 Q8 5.6 9.2 6.6 Q11 6.1 12.8 6.6 Q14 5.6 15.4 5.4 Q16 6.6 15.8 8.2 Q16.8 9.2 16.8 11 Q16.8 14.4 14.5 15.6 V18.6 Q11 19.8 7.5 18.6 Z" fill="#7a34b4"/><path d="M4 14 Q5.5 16.5 7.5 16" stroke="#7a34b4" stroke-width="1" fill="none"/></svg><div class="t" style="top:1053.3px;font-size:12px;line-height:15px;color:#f2f2f2;left:1119px;">Git...</div><svg style="left:1170px;top:1050px;" width="24" height="20" viewBox="0 0 24 20"><path d="M5 0.5 H23.5 L19 19.5 H0.5 Z" fill="#2a6ed8"/><path d="M6 5 L11 10 L5 15 M11 15.5 H16" stroke="#fff" stroke-width="1.8" fill="none"/></svg><div class="t" style="top:1053.3px;font-size:12px;line-height:15px;color:#f2f2f2;left:1198px;">Ad...</div><svg style="left:1248px;top:1049px;" width="24" height="22" viewBox="0 0 24 22"><rect x="0" y="0" width="24" height="20" fill="#3a3a3a"/><rect x="0" y="0" width="24" height="3" fill="#bbb"/><path d="M3 7 L7 10.5 L3 14" stroke="#ccc" stroke-width="1.5" fill="none"/><rect x="10" y="14" width="14" height="8" fill="#38c8f0"/></svg><div class="t" style="top:1053.3px;font-size:12px;line-height:15px;color:#f2f2f2;left:1276px;">C:\...</div><svg style="left:1328px;top:1049px;" width="23" height="22" viewBox="0 0 23 22"><g stroke="#f4f4f4" stroke-width="7.5" stroke-linecap="round" stroke-linejoin="round" fill="none"><path d="M5 18 L10.5 4.5 L17 18"/><path d="M3 10 Q7 14.5 11 14.5 Q15 14.5 19.5 9.5"/></g><path d="M5 18 L10.5 4.5 L17 18" stroke="#f0606e" stroke-width="4.6" stroke-linecap="round" stroke-linejoin="round" fill="none"/><path d="M19 5 L17 10" stroke="#f48a90" stroke-width="4.6" stroke-linecap="round"/><path d="M3 10 Q6.5 14 11 14" stroke="#1a30e8" stroke-width="4.4" stroke-linecap="round" fill="none"/></svg><div class="t" style="top:1053.3px;font-size:12px;line-height:15px;color:#f2f2f2;left:1355px;">Arc</div><svg style="left:1406px;top:1048px;" width="24" height="24" viewBox="0 0 24 24"><defs><linearGradient id="edg1" x1="0" y1="0" x2="1" y2="0.6"><stop offset="0" stop-color="#1a9ae0"/><stop offset="0.5" stop-color="#28c0c8"/><stop offset="1" stop-color="#5ce060"/></linearGradient><linearGradient id="edg2" x1="0" y1="0" x2="0" y2="1"><stop offset="0" stop-color="#2a8ee8"/><stop offset="1" stop-color="#0c5cb8"/></linearGradient></defs><path d="M1 11 Q2 1 12 1 Q23 1 23.5 11.5 Q23.5 16 19 16 H14.5 Q11 16 11.2 12.5 Q12.5 10 15 10.5 Q13 6 8.5 6.2 Q3 6.5 1 11 Z" fill="url(#edg1)"/><path d="M1 11 Q3 6.2 8.5 6.2 Q13 6.2 15 10.5 Q11 9.5 10.5 13.5 Q10.5 17.5 15.5 17.5 H22 Q19 23.5 12 23.5 Q1.5 23.5 1 11 Z" fill="url(#edg2)"/><path d="M10.5 13.5 Q10.5 17.5 15.5 17.5 H22 Q19 23.5 12 23.5 Q7 21 8 15.5 Q9 11.5 12 10.8 Q10.5 11.5 10.5 13.5 Z" fill="#0e4a98" opacity="0.7"/></svg><div class="t" style="top:1053.3px;font-size:12px;line-height:15px;color:#f2f2f2;left:1434px;">Rele...</div><svg style="left:1486px;top:1048px;" width="23" height="25" viewBox="0 0 23 25"><path d="M2 20 L14 6 L22 2 L18 12 L6 24" stroke="#c01818" stroke-width="2" fill="none" opacity="0.9"/><text x="1" y="16" font-family="Liberation Sans" font-style="italic" font-weight="bold" font-size="10" fill="#e02020">RG</text><text x="14" y="24" font-family="Liberation Sans" font-size="6" fill="#e0c020">71</text></svg><div class="t" style="top:1053.3px;font-size:12px;line-height:15px;color:#f2f2f2;left:1513px;">Red...</div><svg style="left:1560px;top:1047px;" width="10" height="9" viewBox="0 0 10 9"><path d="M2.2 8.8 V1 M0.3 3 L2.2 0.8 L4.1 3" stroke="#30b8b0" stroke-width="1.4" fill="none"/><rect x="6.3" y="2.5" width="1.8" height="1.8" fill="#30b8b0"/><rect x="6.3" y="6.8" width="1.8" height="1.8" fill="#30b8b0"/></svg><svg style="left:1560px;top:1063px;" width="10" height="9" viewBox="0 0 10 9"><path d="M2.2 0.2 V8 M0.3 6 L2.2 8.2 L4.1 6" stroke="#30b8b0" stroke-width="1.4" fill="none"/><rect x="6.3" y="2.5" width="1.8" height="1.8" fill="#30b8b0"/><rect x="6.3" y="6.8" width="1.8" height="1.8" fill="#30b8b0"/></svg><div class="t" style="top:1044.4px;font-size:12.5px;line-height:16px;color:#f020e8;right:279px;">0.00 MB/s</div><div class="t" style="top:1060.4px;font-size:12.5px;line-height:16px;color:#f08848;right:279px;">0.01 MB/s</div><svg style="left:1650px;top:1057px;" width="10" height="6" viewBox="0 0 10 6"><path d="M0.6 5.4 L5 1 L9.4 5.4" stroke="#e0e0e0" stroke-width="1.1" fill="none"/></svg><svg style="left:1672px;top:1053px;" width="15" height="15" viewBox="0 0 15 15"><circle cx="7.5" cy="7.5" r="6" fill="none" stroke="#ea4335" stroke-width="3" stroke-dasharray="9.4 28"/><circle cx="7.5" cy="7.5" r="6" fill="none" stroke="#fbbc04" stroke-width="3" stroke-dasharray="0 9.4 9.4 28"/><circle cx="7.5" cy="7.5" r="6" fill="none" stroke="#34a853" stroke-width="3" stroke-dasharray="0 18.8 9.4 28"/><circle cx="7.5" cy="7.5" r="6" fill="none" stroke="#4285f4" stroke-width="3" stroke-dasharray="0 28.2 9.4 28"/></svg><svg style="left:1695px;top:1055px;" width="17" height="9" viewBox="0 0 17 9"><path d="M2 8.5 Q0 8.5 0.5 6.5 Q1 5 3 5 Q4 1.5 8 1.5 Q11.5 1.5 12.5 4.5 Q16.5 4.5 16.5 8.5 Z" fill="#8a8a8a"/></svg><svg style="left:1719px;top:1052px;" width="16" height="16" viewBox="0 0 16 16"><circle cx="8" cy="8" r="3.6" fill="none" stroke="#e8e8e8" stroke-width="1.2"/><g stroke="#e8e8e8" stroke-width="1.2" stroke-linecap="round"><path d="M8 0.8 V2.4 M8 13.6 V15.2 M0.8 8 H2.4 M13.6 8 H15.2 M2.9 2.9 L4 4 M12 12 L13.1 13.1 M2.9 13.1 L4 12 M12 4 L13.1 2.9"/></g></svg><svg style="left:1743px;top:1053px;" width="16" height="14" viewBox="0 0 16 14"><path d="M0.6 4.6 H3.6 L7.6 1 V13 L3.6 9.4 H0.6 Z" fill="none" stroke="#e8e8e8" stroke-width="1.1"/><path d="M10 4.5 Q11.5 7 10 9.5 M12.3 2.8 Q14.8 7 12.3 11.2" stroke="#e8e8e8" stroke-width="1.1" fill="none"/><path d="M14.5 1.5 Q17.5 7 14.5 12.5" stroke="#777" stroke-width="1" fill="none"/></svg><svg style="left:1767px;top:1051px;" width="17" height="17" viewBox="0 0 17 17"><rect x="0.6" y="3" width="12.5" height="9" fill="none" stroke="#e8e8e8" stroke-width="1.1"/><path d="M4 15.5 H10 M7 12 V15.5" stroke="#e8e8e8" stroke-width="1.1"/><rect x="12" y="0.6" width="4" height="5" rx="1" fill="none" stroke="#e8e8e8" stroke-width="1"/><path d="M14 5.6 V16" stroke="#e8e8e8" stroke-width="1"/></svg><div class="t" style="top:1045.3px;font-size:12px;line-height:15px;color:#f0f0f0;left:1603.5px;width:400px;text-align:center;">ENG</div><div class="t" style="top:1061.8px;font-size:12px;line-height:15px;color:#f0f0f0;left:1603.5px;width:400px;text-align:center;">IN</div><div class="t" style="top:1045.3px;font-size:12px;line-height:15px;color:#f0f0f0;left:1655px;width:400px;text-align:center;">23:19:54</div><div class="t" style="top:1061.8px;font-size:12px;line-height:15px;color:#f0f0f0;left:1655px;width:400px;text-align:center;">04-11-2024</div><svg style="left:1890px;top:1052px;" width="15" height="16" viewBox="0 0 15 16"><path d="M2 12 Q3 10.5 3 7.5 Q3 2.5 7.5 2.5 Q12 2.5 12 7.5 Q12 10.5 13 12 Z" fill="#8ab8a8"/><path d="M6 13.5 Q7.5 15.5 9 13.5" stroke="#8ab8a8" stroke-width="1.2" fill="none"/><text x="5" y="10" font-family="Liberation Sans" font-weight="bold" font-size="5" fill="#1c2020">z</text><text x="10" y="5" font-family="Liberation Sans" font-weight="bold" font-size="5" fill="#8ab8a8">z</text></svg>
</body></html>
